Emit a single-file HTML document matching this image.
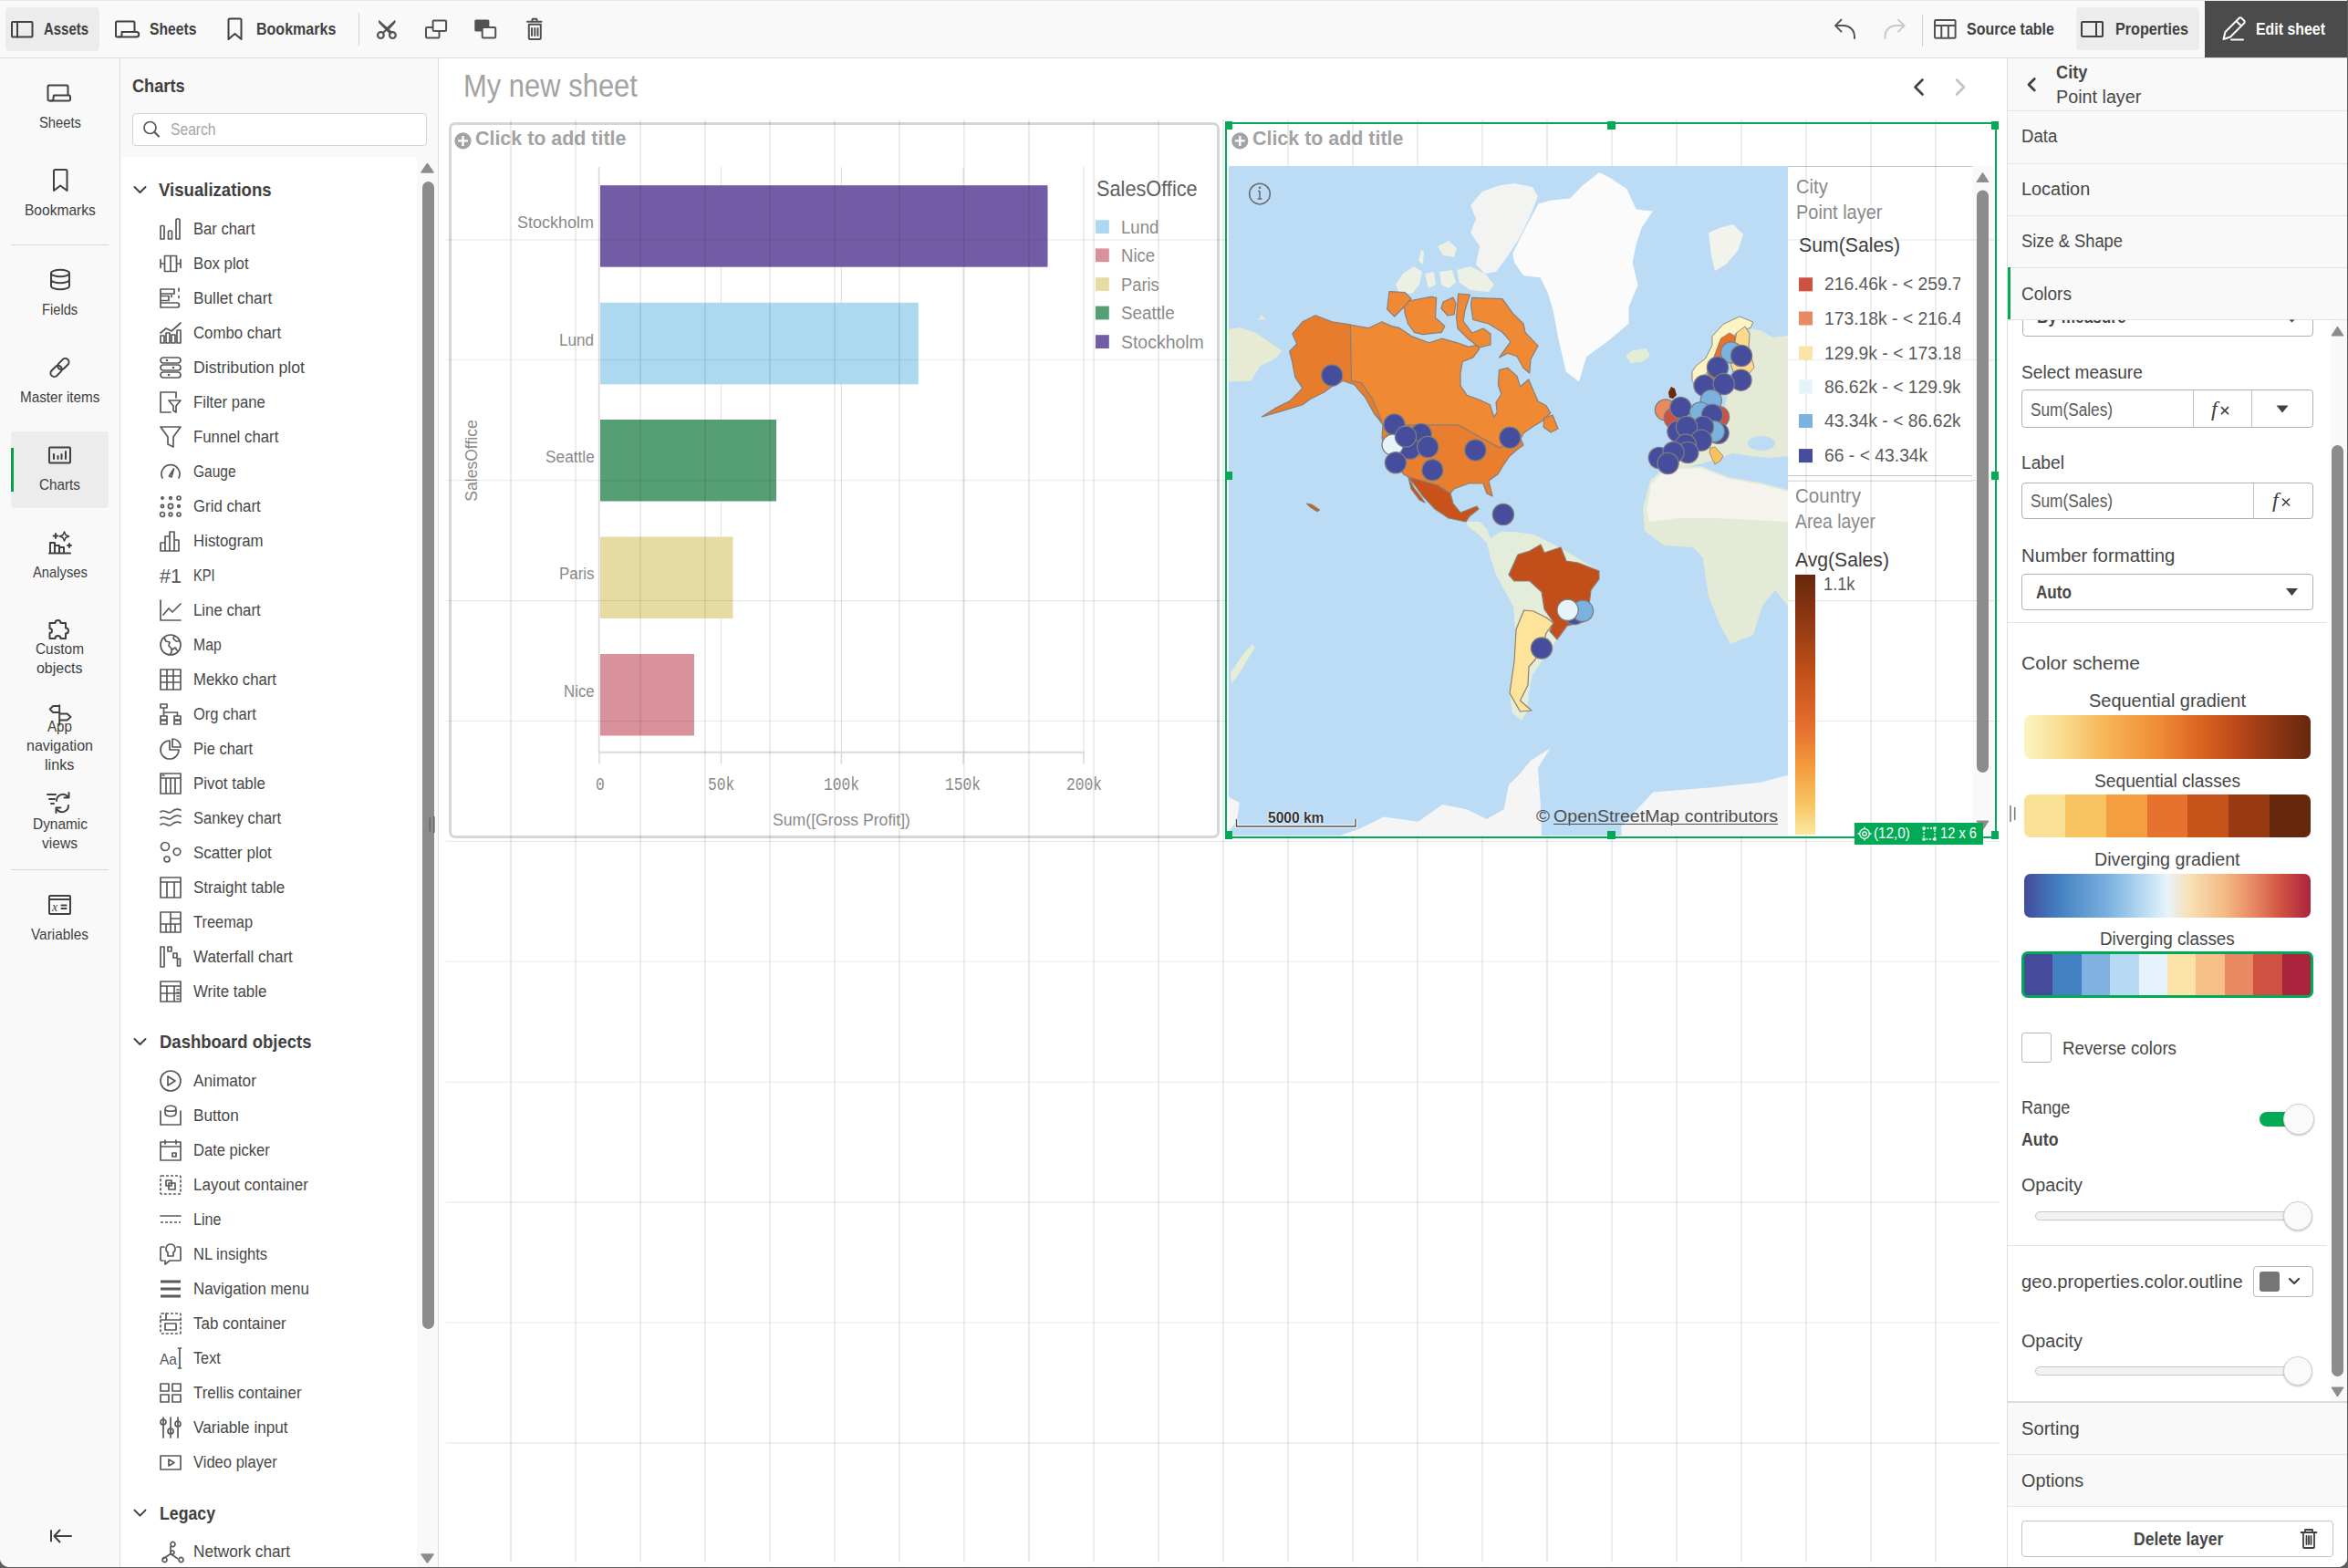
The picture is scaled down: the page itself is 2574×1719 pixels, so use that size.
<!DOCTYPE html><html><head><meta charset="utf-8"><title>Qlik sheet editor</title><style>
*{margin:0;padding:0;box-sizing:border-box}
html,body{width:2574px;height:1719px;overflow:hidden;background:#5e5e5e}
body{position:relative;font-family:"Liberation Sans",sans-serif}
#app{position:absolute;left:0;top:0;width:2573px;height:1717.7px;background:#fff;border-radius:0 0 10px 10px;overflow:hidden}
.t{position:absolute;white-space:nowrap;transform-origin:0 50%}
.r{position:absolute;display:block}
</style></head><body><div id="app"><div class="r" style="left:0.00px;top:0.00px;width:2574.00px;height:64.00px;background:#f9f9f9;"></div>
<div class="r" style="left:0.00px;top:0.00px;width:2574.00px;height:1.20px;background:#e8e8e8;"></div>
<div class="r" style="left:0.00px;top:63.00px;width:2574.00px;height:1.00px;background:#d9d9d9;"></div>
<div class="r" style="left:0.00px;top:64.00px;width:131.00px;height:1655.00px;background:#f9f9f9;"></div>
<div class="r" style="left:131.00px;top:64.00px;width:1.00px;height:1655.00px;background:#dedede;"></div>
<div class="r" style="left:132.00px;top:64.00px;width:348.00px;height:108.00px;background:#f9f9f9;"></div>
<div class="r" style="left:132.00px;top:172.00px;width:325.00px;height:1547.00px;background:#ffffff;"></div>
<div class="r" style="left:457.00px;top:172.00px;width:23.00px;height:1547.00px;background:#f9f9f9;"></div>
<div class="r" style="left:480.00px;top:64.00px;width:1.00px;height:1655.00px;background:#dedede;"></div>
<div class="r" style="left:2200.00px;top:64.00px;width:1.00px;height:1655.00px;background:#e0e0e0;"></div>
<div class="r" style="left:6.00px;top:8.00px;width:103.00px;height:48.00px;background:#ececec;border-radius:4px;"></div>
<div class="r" style="left:2276.00px;top:8.00px;width:135.00px;height:47.00px;background:#ececec;border-radius:4px;"></div>
<div class="r" style="left:2417.00px;top:1.10px;width:157.00px;height:61.90px;background:#4b4b4b;"></div>
<div class="r" style="left:393.00px;top:14.00px;width:1.00px;height:36.00px;background:#d0d0d0;"></div>
<div class="r" style="left:2107.00px;top:16.00px;width:1.00px;height:35.00px;background:#d0d0d0;"></div>
<div class="t" style="left:48.20px;top:21.77px;font-size:17.88px;line-height:21.45px;color:#404040;font-weight:700;transform:scaleX(0.8356);font-family:'Liberation Sans',sans-serif;">Assets</div>
<div class="t" style="left:163.50px;top:21.77px;font-size:17.88px;line-height:21.45px;color:#404040;font-weight:700;transform:scaleX(0.8784);font-family:'Liberation Sans',sans-serif;">Sheets</div>
<div class="t" style="left:281.40px;top:21.77px;font-size:17.88px;line-height:21.45px;color:#404040;font-weight:700;transform:scaleX(0.8975);font-family:'Liberation Sans',sans-serif;">Bookmarks</div>
<div class="t" style="left:2156.00px;top:21.77px;font-size:17.88px;line-height:21.45px;color:#404040;font-weight:700;transform:scaleX(0.8946);font-family:'Liberation Sans',sans-serif;">Source table</div>
<div class="t" style="left:2318.50px;top:21.77px;font-size:17.88px;line-height:21.45px;color:#404040;font-weight:700;transform:scaleX(0.9047);font-family:'Liberation Sans',sans-serif;">Properties</div>
<div class="t" style="left:2473.00px;top:21.77px;font-size:17.88px;line-height:21.45px;color:#ffffff;font-weight:700;transform:scaleX(0.8895);font-family:'Liberation Sans',sans-serif;">Edit sheet</div>
<div class="r" style="left:12.00px;top:268.00px;width:107.00px;height:1.00px;background:#d9d9d9;"></div>
<div class="r" style="left:12.00px;top:953.00px;width:107.00px;height:1.00px;background:#d9d9d9;"></div>
<div class="r" style="left:12.00px;top:473.40px;width:107.00px;height:83.20px;background:#ececec;border-radius:4px;"></div>
<div class="r" style="left:12.00px;top:490.60px;width:3.00px;height:48.40px;background:#0a9b4b;"></div>
<div class="t" style="left:42.70px;top:125.10px;font-size:15.99px;line-height:19.19px;color:#404040;transform:scaleX(0.9241);font-family:'Liberation Sans',sans-serif;">Sheets</div>
<div class="t" style="left:26.80px;top:221.21px;font-size:15.99px;line-height:19.19px;color:#404040;transform:scaleX(0.9729);font-family:'Liberation Sans',sans-serif;">Bookmarks</div>
<div class="t" style="left:46.10px;top:329.70px;font-size:15.99px;line-height:19.19px;color:#404040;transform:scaleX(0.9191);font-family:'Liberation Sans',sans-serif;">Fields</div>
<div class="t" style="left:21.95px;top:425.90px;font-size:15.99px;line-height:19.19px;color:#404040;transform:scaleX(0.9562);font-family:'Liberation Sans',sans-serif;">Master items</div>
<div class="t" style="left:43.20px;top:521.80px;font-size:15.99px;line-height:19.19px;color:#404040;transform:scaleX(0.9556);font-family:'Liberation Sans',sans-serif;">Charts</div>
<div class="t" style="left:35.70px;top:617.90px;font-size:15.99px;line-height:19.19px;color:#404040;transform:scaleX(0.9248);font-family:'Liberation Sans',sans-serif;">Analyses</div>
<div class="t" style="left:39.20px;top:701.90px;font-size:15.99px;line-height:19.19px;color:#404040;transform:scaleX(0.9621);font-family:'Liberation Sans',sans-serif;">Custom</div>
<div class="t" style="left:40.45px;top:722.61px;font-size:15.99px;line-height:19.19px;color:#404040;transform:scaleX(0.9969);font-family:'Liberation Sans',sans-serif;">objects</div>
<div class="t" style="left:52.20px;top:787.00px;font-size:15.99px;line-height:19.19px;color:#404040;transform:scaleX(0.9491);font-family:'Liberation Sans',sans-serif;">App</div>
<div class="t" style="left:29.20px;top:807.70px;font-size:15.99px;line-height:19.19px;color:#404040;transform:scaleX(1.0014);font-family:'Liberation Sans',sans-serif;">navigation</div>
<div class="t" style="left:49.45px;top:828.61px;font-size:15.99px;line-height:19.19px;color:#404040;transform:scaleX(1.0161);font-family:'Liberation Sans',sans-serif;">links</div>
<div class="t" style="left:35.70px;top:894.40px;font-size:15.99px;line-height:19.19px;color:#404040;transform:scaleX(0.9648);font-family:'Liberation Sans',sans-serif;">Dynamic</div>
<div class="t" style="left:46.20px;top:914.70px;font-size:15.99px;line-height:19.19px;color:#404040;transform:scaleX(0.9755);font-family:'Liberation Sans',sans-serif;">views</div>
<div class="t" style="left:34.20px;top:1014.90px;font-size:15.99px;line-height:19.19px;color:#404040;transform:scaleX(0.9623);font-family:'Liberation Sans',sans-serif;">Variables</div>
<div class="t" style="left:144.70px;top:81.81px;font-size:20.64px;line-height:24.77px;color:#404040;font-weight:700;transform:scaleX(0.8810);font-family:'Liberation Sans',sans-serif;">Charts</div>
<div class="r" style="left:144.50px;top:124.30px;width:323.00px;height:35.30px;background:#ffffff;border:1px solid #d4d4d4;border-radius:4px;box-sizing:border-box;"></div>
<div class="t" style="left:187.00px;top:131.01px;font-size:18.31px;line-height:21.98px;color:#a6a6a6;transform:scaleX(0.8547);font-family:'Liberation Sans',sans-serif;">Search</div>
<div class="t" style="left:174.40px;top:195.35px;font-size:21.08px;line-height:25.29px;color:#404040;font-weight:700;transform:scaleX(0.8818);font-family:'Liberation Sans',sans-serif;">Visualizations</div>
<div class="t" style="left:212.00px;top:239.49px;font-size:19.19px;line-height:23.02px;color:#474747;transform:scaleX(0.8671);font-family:'Liberation Sans',sans-serif;">Bar chart</div>
<div class="t" style="left:212.00px;top:277.49px;font-size:19.19px;line-height:23.02px;color:#474747;transform:scaleX(0.8741);font-family:'Liberation Sans',sans-serif;">Box plot</div>
<div class="t" style="left:212.00px;top:315.49px;font-size:19.19px;line-height:23.02px;color:#474747;transform:scaleX(0.8981);font-family:'Liberation Sans',sans-serif;">Bullet chart</div>
<div class="t" style="left:212.00px;top:353.49px;font-size:19.19px;line-height:23.02px;color:#474747;transform:scaleX(0.8749);font-family:'Liberation Sans',sans-serif;">Combo chart</div>
<div class="t" style="left:212.00px;top:391.49px;font-size:19.19px;line-height:23.02px;color:#474747;transform:scaleX(0.9226);font-family:'Liberation Sans',sans-serif;">Distribution plot</div>
<div class="t" style="left:212.00px;top:429.49px;font-size:19.19px;line-height:23.02px;color:#474747;transform:scaleX(0.8704);font-family:'Liberation Sans',sans-serif;">Filter pane</div>
<div class="t" style="left:212.00px;top:467.49px;font-size:19.19px;line-height:23.02px;color:#474747;transform:scaleX(0.8748);font-family:'Liberation Sans',sans-serif;">Funnel chart</div>
<div class="t" style="left:212.00px;top:505.49px;font-size:19.19px;line-height:23.02px;color:#474747;transform:scaleX(0.8072);font-family:'Liberation Sans',sans-serif;">Gauge</div>
<div class="t" style="left:212.00px;top:543.49px;font-size:19.19px;line-height:23.02px;color:#474747;transform:scaleX(0.8750);font-family:'Liberation Sans',sans-serif;">Grid chart</div>
<div class="t" style="left:212.00px;top:581.49px;font-size:19.19px;line-height:23.02px;color:#474747;transform:scaleX(0.8762);font-family:'Liberation Sans',sans-serif;">Histogram</div>
<div class="t" style="left:212.00px;top:619.49px;font-size:19.19px;line-height:23.02px;color:#474747;transform:scaleX(0.7599);font-family:'Liberation Sans',sans-serif;">KPI</div>
<div class="t" style="left:212.00px;top:657.49px;font-size:19.19px;line-height:23.02px;color:#474747;transform:scaleX(0.8747);font-family:'Liberation Sans',sans-serif;">Line chart</div>
<div class="t" style="left:212.00px;top:695.49px;font-size:19.19px;line-height:23.02px;color:#474747;transform:scaleX(0.8225);font-family:'Liberation Sans',sans-serif;">Map</div>
<div class="t" style="left:212.00px;top:733.49px;font-size:19.19px;line-height:23.02px;color:#474747;transform:scaleX(0.8709);font-family:'Liberation Sans',sans-serif;">Mekko chart</div>
<div class="t" style="left:212.00px;top:771.49px;font-size:19.19px;line-height:23.02px;color:#474747;transform:scaleX(0.8616);font-family:'Liberation Sans',sans-serif;">Org chart</div>
<div class="t" style="left:212.00px;top:809.49px;font-size:19.19px;line-height:23.02px;color:#474747;transform:scaleX(0.8598);font-family:'Liberation Sans',sans-serif;">Pie chart</div>
<div class="t" style="left:212.00px;top:847.49px;font-size:19.19px;line-height:23.02px;color:#474747;transform:scaleX(0.8807);font-family:'Liberation Sans',sans-serif;">Pivot table</div>
<div class="t" style="left:212.00px;top:885.49px;font-size:19.19px;line-height:23.02px;color:#474747;transform:scaleX(0.8582);font-family:'Liberation Sans',sans-serif;">Sankey chart</div>
<div class="t" style="left:212.00px;top:923.49px;font-size:19.19px;line-height:23.02px;color:#474747;transform:scaleX(0.8841);font-family:'Liberation Sans',sans-serif;">Scatter plot</div>
<div class="t" style="left:212.00px;top:961.49px;font-size:19.19px;line-height:23.02px;color:#474747;transform:scaleX(0.8854);font-family:'Liberation Sans',sans-serif;">Straight table</div>
<div class="t" style="left:212.00px;top:999.49px;font-size:19.19px;line-height:23.02px;color:#474747;transform:scaleX(0.8559);font-family:'Liberation Sans',sans-serif;">Treemap</div>
<div class="t" style="left:212.00px;top:1037.49px;font-size:19.19px;line-height:23.02px;color:#474747;transform:scaleX(0.8844);font-family:'Liberation Sans',sans-serif;">Waterfall chart</div>
<div class="t" style="left:212.00px;top:1075.49px;font-size:19.19px;line-height:23.02px;color:#474747;transform:scaleX(0.8790);font-family:'Liberation Sans',sans-serif;">Write table</div>
<div class="t" style="left:175.00px;top:1129.36px;font-size:21.08px;line-height:25.29px;color:#404040;font-weight:700;transform:scaleX(0.8771);font-family:'Liberation Sans',sans-serif;">Dashboard objects</div>
<div class="t" style="left:212.00px;top:1173.49px;font-size:19.19px;line-height:23.02px;color:#474747;transform:scaleX(0.8974);font-family:'Liberation Sans',sans-serif;">Animator</div>
<div class="t" style="left:212.00px;top:1211.49px;font-size:19.19px;line-height:23.02px;color:#474747;transform:scaleX(0.8960);font-family:'Liberation Sans',sans-serif;">Button</div>
<div class="t" style="left:212.00px;top:1249.49px;font-size:19.19px;line-height:23.02px;color:#474747;transform:scaleX(0.8636);font-family:'Liberation Sans',sans-serif;">Date picker</div>
<div class="t" style="left:212.00px;top:1287.49px;font-size:19.19px;line-height:23.02px;color:#474747;transform:scaleX(0.8868);font-family:'Liberation Sans',sans-serif;">Layout container</div>
<div class="t" style="left:212.00px;top:1325.49px;font-size:19.19px;line-height:23.02px;color:#474747;transform:scaleX(0.8408);font-family:'Liberation Sans',sans-serif;">Line</div>
<div class="t" style="left:212.00px;top:1363.49px;font-size:19.19px;line-height:23.02px;color:#474747;transform:scaleX(0.8609);font-family:'Liberation Sans',sans-serif;">NL insights</div>
<div class="t" style="left:212.00px;top:1401.49px;font-size:19.19px;line-height:23.02px;color:#474747;transform:scaleX(0.8807);font-family:'Liberation Sans',sans-serif;">Navigation menu</div>
<div class="t" style="left:212.00px;top:1439.49px;font-size:19.19px;line-height:23.02px;color:#474747;transform:scaleX(0.8829);font-family:'Liberation Sans',sans-serif;">Tab container</div>
<div class="t" style="left:212.00px;top:1477.49px;font-size:19.19px;line-height:23.02px;color:#474747;transform:scaleX(0.8469);font-family:'Liberation Sans',sans-serif;">Text</div>
<div class="t" style="left:212.00px;top:1515.49px;font-size:19.19px;line-height:23.02px;color:#474747;transform:scaleX(0.8797);font-family:'Liberation Sans',sans-serif;">Trellis container</div>
<div class="t" style="left:212.00px;top:1553.49px;font-size:19.19px;line-height:23.02px;color:#474747;transform:scaleX(0.8938);font-family:'Liberation Sans',sans-serif;">Variable input</div>
<div class="t" style="left:212.00px;top:1591.49px;font-size:19.19px;line-height:23.02px;color:#474747;transform:scaleX(0.8625);font-family:'Liberation Sans',sans-serif;">Video player</div>
<div class="t" style="left:174.80px;top:1645.95px;font-size:21.08px;line-height:25.29px;color:#404040;font-weight:700;transform:scaleX(0.8398);font-family:'Liberation Sans',sans-serif;">Legacy</div>
<div class="t" style="left:212.00px;top:1689.49px;font-size:19.19px;line-height:23.02px;color:#474747;transform:scaleX(0.8956);font-family:'Liberation Sans',sans-serif;">Network chart</div>
<div class="r" style="left:462.50px;top:199.00px;width:13.00px;height:1258.00px;background:#8c8c8c;border-radius:6.5px;"></div>
<div class="r" style="left:481.00px;top:64.00px;width:1719.00px;height:1655.00px;background:#ffffff;"></div>
<div class="t" style="left:507.50px;top:73.75px;font-size:34.59px;line-height:41.51px;color:#a3a3a3;transform:scaleX(0.8949);font-family:'Liberation Sans',sans-serif;">My new sheet</div>
<div class="r" style="left:492.20px;top:134.00px;width:845.00px;height:785.20px;background:transparent;border:3px solid #d6d6d6;border-radius:7px;"></div>
<div class="t" style="left:520.70px;top:138.11px;font-size:22.82px;line-height:27.38px;color:#a3a3a3;font-weight:700;transform:scaleX(0.9390);font-family:'Liberation Sans',sans-serif;">Click to add title</div>
<svg class="r" style="left:0.00px;top:0.00px;" width="2574.00" height="1719.00" viewBox="0 0 2574 1719"><line x1="790.5" y1="183" x2="790.5" y2="824" stroke="#e3e3e3" stroke-width="1.2"/><line x1="922.4" y1="183" x2="922.4" y2="824" stroke="#e3e3e3" stroke-width="1.2"/><line x1="1056" y1="183" x2="1056" y2="824" stroke="#e3e3e3" stroke-width="1.2"/><line x1="1188" y1="183" x2="1188" y2="824" stroke="#e3e3e3" stroke-width="1.2"/><line x1="656.7" y1="183" x2="656.7" y2="825" stroke="#d9d9d9" stroke-width="1.6"/><line x1="656" y1="824.8" x2="1189" y2="824.8" stroke="#d9d9d9" stroke-width="2"/><line x1="657" y1="825" x2="657" y2="837.5" stroke="#d9d9d9" stroke-width="1.5"/><line x1="790.5" y1="825" x2="790.5" y2="837.5" stroke="#d9d9d9" stroke-width="1.5"/><line x1="922.4" y1="825" x2="922.4" y2="837.5" stroke="#d9d9d9" stroke-width="1.5"/><line x1="1056" y1="825" x2="1056" y2="837.5" stroke="#d9d9d9" stroke-width="1.5"/><line x1="1188" y1="825" x2="1188" y2="837.5" stroke="#d9d9d9" stroke-width="1.5"/><rect x="658" y="203.2" width="490.5" height="89.5" fill="#735ca6"/><rect x="658" y="331.8" width="348.7" height="89.5" fill="#acd8f0"/><rect x="658" y="460" width="193" height="89.5" fill="#569e74"/><rect x="658" y="588.5" width="145.5" height="89.5" fill="#e6dca3"/><rect x="658" y="717" width="103" height="89.5" fill="#d9929c"/><circle cx="507.5" cy="154.4" r="9.1" fill="#a3a3a3"/><path d="M502 154.4 h11 M507.5 148.9 v11" stroke="#fff" stroke-width="2.4"/><rect x="1201" y="241.2" width="14.8" height="14.8" fill="#acd8f0"/><rect x="1201" y="272.4" width="14.8" height="14.8" fill="#d9929c"/><rect x="1201" y="304.2" width="14.8" height="14.8" fill="#e6dca3"/><rect x="1201" y="335.6" width="14.8" height="14.8" fill="#569e74"/><rect x="1201" y="367.2" width="14.8" height="14.8" fill="#735ca6"/></svg>
<div class="t" style="left:567.30px;top:233.06px;font-size:18.90px;line-height:22.67px;color:#8a8a8a;transform:scaleX(0.9522);font-family:'Liberation Sans',sans-serif;">Stockholm</div>
<div class="t" style="left:613.30px;top:361.67px;font-size:18.90px;line-height:22.67px;color:#8a8a8a;transform:scaleX(0.9040);font-family:'Liberation Sans',sans-serif;">Lund</div>
<div class="t" style="left:597.50px;top:490.17px;font-size:18.90px;line-height:22.67px;color:#8a8a8a;transform:scaleX(0.9145);font-family:'Liberation Sans',sans-serif;">Seattle</div>
<div class="t" style="left:612.80px;top:618.37px;font-size:18.90px;line-height:22.67px;color:#8a8a8a;transform:scaleX(0.8943);font-family:'Liberation Sans',sans-serif;">Paris</div>
<div class="t" style="left:617.60px;top:747.16px;font-size:18.90px;line-height:22.67px;color:#8a8a8a;transform:scaleX(0.8915);font-family:'Liberation Sans',sans-serif;">Nice</div>
<div class="t" style="left:1201.80px;top:192.60px;font-size:23.84px;line-height:28.60px;color:#5e5e5e;transform:scaleX(0.9114);font-family:'Liberation Sans',sans-serif;">SalesOffice</div>
<div class="t" style="left:1229.00px;top:236.59px;font-size:20.35px;line-height:24.42px;color:#8a8a8a;transform:scaleX(0.9145);font-family:'Liberation Sans',sans-serif;">Lund</div>
<div class="t" style="left:1229.00px;top:267.59px;font-size:20.35px;line-height:24.42px;color:#8a8a8a;transform:scaleX(0.9114);font-family:'Liberation Sans',sans-serif;">Nice</div>
<div class="t" style="left:1229.00px;top:299.69px;font-size:20.35px;line-height:24.42px;color:#8a8a8a;transform:scaleX(0.9016);font-family:'Liberation Sans',sans-serif;">Paris</div>
<div class="t" style="left:1229.00px;top:330.79px;font-size:20.35px;line-height:24.42px;color:#8a8a8a;transform:scaleX(0.9266);font-family:'Liberation Sans',sans-serif;">Seattle</div>
<div class="t" style="left:1229.00px;top:362.69px;font-size:20.35px;line-height:24.42px;color:#8a8a8a;transform:scaleX(0.9558);font-family:'Liberation Sans',sans-serif;">Stockholm</div>
<div class="t" style="left:653.10px;top:849.32px;font-size:20.30px;line-height:24.36px;color:#8a8a8a;transform:scaleX(0.8044);font-family:'Liberation Mono',monospace;">0</div>
<div class="t" style="left:776.30px;top:849.32px;font-size:20.30px;line-height:24.36px;color:#8a8a8a;transform:scaleX(0.8044);font-family:'Liberation Mono',monospace;">50k</div>
<div class="t" style="left:903.40px;top:849.32px;font-size:20.30px;line-height:24.36px;color:#8a8a8a;transform:scaleX(0.8044);font-family:'Liberation Mono',monospace;">100k</div>
<div class="t" style="left:1036.40px;top:849.32px;font-size:20.30px;line-height:24.36px;color:#8a8a8a;transform:scaleX(0.8044);font-family:'Liberation Mono',monospace;">150k</div>
<div class="t" style="left:1169.40px;top:849.32px;font-size:20.30px;line-height:24.36px;color:#8a8a8a;transform:scaleX(0.8044);font-family:'Liberation Mono',monospace;">200k</div>
<div class="t" style="left:847.00px;top:887.63px;font-size:18.60px;line-height:22.33px;color:#8a8a8a;transform:scaleX(0.9485);font-family:'Liberation Sans',sans-serif;">Sum([Gross Profit])</div>
<div class="r" style="left:516.6px;top:505px;width:0;height:0"><div class="r" style="left:0;top:0;white-space:nowrap;transform:translate(-50%,-50%) rotate(-90deg) scaleX(0.93);font-size:18.9px;line-height:22px;color:#8a8a8a">SalesOffice</div></div>
<svg class="r" style="left:0.00px;top:0.00px;" width="2574.00" height="1719.00" viewBox="0 0 2574 1719"><path d="M2107.5 87.5 l-8 8 l8 8" fill="none" stroke="#404040" stroke-width="2.6" stroke-linecap="round" stroke-linejoin="round"/><path d="M2145 87.5 l8 8 l-8 8" fill="none" stroke="#c4c4c4" stroke-width="2.6" stroke-linecap="round" stroke-linejoin="round"/></svg>
<div class="t" style="left:1372.50px;top:138.11px;font-size:22.82px;line-height:27.38px;color:#a3a3a3;font-weight:700;transform:scaleX(0.9390);font-family:'Liberation Sans',sans-serif;">Click to add title</div>
<div class="r" style="left:1960.00px;top:182.00px;width:202.00px;height:734.00px;background:#ffffff;"></div>
<div class="r" style="left:2162.00px;top:182.00px;width:24.00px;height:734.00px;background:#f9f9f9;"></div>
<div class="r" style="left:1960.00px;top:181.50px;width:202.00px;height:1.50px;background:#c8c8c8;"></div>
<div class="r" style="left:1960.00px;top:521.00px;width:202.00px;height:1.20px;background:#c8c8c8;"></div>
<div class="r" style="left:1960.00px;top:526.50px;width:202.00px;height:1.20px;background:#e0e0e0;"></div>
<svg class="r" style="left:0.00px;top:0.00px;" width="2574.00" height="1719.00" viewBox="0 0 2574 1719"><line x1="560" y1="131" x2="560" y2="1712.5" stroke="rgba(0,0,0,0.095)" stroke-width="1.5"/><line x1="631" y1="131" x2="631" y2="1712.5" stroke="rgba(0,0,0,0.095)" stroke-width="1.5"/><line x1="702" y1="131" x2="702" y2="1712.5" stroke="rgba(0,0,0,0.095)" stroke-width="1.5"/><line x1="773" y1="131" x2="773" y2="1712.5" stroke="rgba(0,0,0,0.095)" stroke-width="1.5"/><line x1="844" y1="131" x2="844" y2="1712.5" stroke="rgba(0,0,0,0.095)" stroke-width="1.5"/><line x1="915" y1="131" x2="915" y2="1712.5" stroke="rgba(0,0,0,0.095)" stroke-width="1.5"/><line x1="986" y1="131" x2="986" y2="1712.5" stroke="rgba(0,0,0,0.095)" stroke-width="1.5"/><line x1="1057" y1="131" x2="1057" y2="1712.5" stroke="rgba(0,0,0,0.095)" stroke-width="1.5"/><line x1="1128" y1="131" x2="1128" y2="1712.5" stroke="rgba(0,0,0,0.095)" stroke-width="1.5"/><line x1="1199" y1="131" x2="1199" y2="1712.5" stroke="rgba(0,0,0,0.095)" stroke-width="1.5"/><line x1="1270" y1="131" x2="1270" y2="1712.5" stroke="rgba(0,0,0,0.095)" stroke-width="1.5"/><line x1="1341" y1="131" x2="1341" y2="1712.5" stroke="rgba(0,0,0,0.095)" stroke-width="1.5"/><line x1="1412" y1="131" x2="1412" y2="1712.5" stroke="rgba(0,0,0,0.095)" stroke-width="1.5"/><line x1="1483" y1="131" x2="1483" y2="1712.5" stroke="rgba(0,0,0,0.095)" stroke-width="1.5"/><line x1="1554" y1="131" x2="1554" y2="1712.5" stroke="rgba(0,0,0,0.095)" stroke-width="1.5"/><line x1="1625" y1="131" x2="1625" y2="1712.5" stroke="rgba(0,0,0,0.095)" stroke-width="1.5"/><line x1="1696" y1="131" x2="1696" y2="1712.5" stroke="rgba(0,0,0,0.095)" stroke-width="1.5"/><line x1="1767" y1="131" x2="1767" y2="1712.5" stroke="rgba(0,0,0,0.095)" stroke-width="1.5"/><line x1="1838" y1="131" x2="1838" y2="1712.5" stroke="rgba(0,0,0,0.095)" stroke-width="1.5"/><line x1="1909" y1="131" x2="1909" y2="1712.5" stroke="rgba(0,0,0,0.095)" stroke-width="1.5"/><line x1="1980" y1="131" x2="1980" y2="1712.5" stroke="rgba(0,0,0,0.095)" stroke-width="1.5"/><line x1="2051" y1="131" x2="2051" y2="1712.5" stroke="rgba(0,0,0,0.095)" stroke-width="1.5"/><line x1="2122" y1="131" x2="2122" y2="1712.5" stroke="rgba(0,0,0,0.095)" stroke-width="1.5"/><line x1="489" y1="262.9" x2="2192" y2="262.9" stroke="rgba(0,0,0,0.085)" stroke-width="1.1"/><line x1="489" y1="394.8" x2="2192" y2="394.8" stroke="rgba(0,0,0,0.085)" stroke-width="1.1"/><line x1="489" y1="526.7" x2="2192" y2="526.7" stroke="rgba(0,0,0,0.085)" stroke-width="1.1"/><line x1="489" y1="658.6" x2="2192" y2="658.6" stroke="rgba(0,0,0,0.085)" stroke-width="1.1"/><line x1="489" y1="790.5" x2="2192" y2="790.5" stroke="rgba(0,0,0,0.085)" stroke-width="1.1"/><line x1="489" y1="922.4" x2="2192" y2="922.4" stroke="rgba(0,0,0,0.085)" stroke-width="1.1"/><line x1="489" y1="1054.3" x2="2192" y2="1054.3" stroke="rgba(0,0,0,0.085)" stroke-width="1.1"/><line x1="489" y1="1186.2" x2="2192" y2="1186.2" stroke="rgba(0,0,0,0.085)" stroke-width="1.1"/><line x1="489" y1="1318.1" x2="2192" y2="1318.1" stroke="rgba(0,0,0,0.085)" stroke-width="1.1"/><line x1="489" y1="1450" x2="2192" y2="1450" stroke="rgba(0,0,0,0.085)" stroke-width="1.1"/><line x1="489" y1="1581.9" x2="2192" y2="1581.9" stroke="rgba(0,0,0,0.085)" stroke-width="1.1"/></svg>
<svg class="r" style="left:0.00px;top:0.00px;" width="2574.00" height="1719.00" viewBox="0 0 2574 1719"><defs><clipPath id="mc"><rect x="1347" y="182" width="613" height="734"/></clipPath><clipPath id="lc"><rect x="1960" y="182" width="189" height="734"/></clipPath><linearGradient id="lg" x1="0" y1="0" x2="0" y2="1"><stop offset="0" stop-color="#66280d"/><stop offset="0.2" stop-color="#973a14"/><stop offset="0.4" stop-color="#c6531a"/><stop offset="0.6" stop-color="#e7722e"/><stop offset="0.75" stop-color="#f59e3f"/><stop offset="0.88" stop-color="#f8c462"/><stop offset="1" stop-color="#fbe7a2"/></linearGradient></defs><g clip-path="url(#mc)"><rect x="1347" y="182" width="613" height="734" fill="#bcdbf5"/><path d="M1347 361 L1359 359 L1377 365 L1391.5 375 L1405.6 385 L1397.5 393.3 L1381.4 401.4 L1371.3 417.5 L1347 418.5 Z" fill="#e8ebd3" /><path d="M1379 351 L1383 345 L1387 350 Z" fill="#e8ebd3" /><path d="M1612 225 L1625 210 L1645 203 L1660 201 L1680 205 L1686 215 L1676 240 L1665 262 L1650 285 L1640 298 L1628 300 L1618 290 L1622 270 L1612 255 L1618 240 Z" fill="#f3f3f1" /><path d="M1576 270 L1588 264 L1597 272 L1594 282 L1582 280 Z" fill="#edf0e4" /><path d="M1530 312 L1538 300 L1550 292 L1559 298 L1556 312 L1548 322 L1534 321 Z" fill="#edf0e4" /><path d="M1562 300 L1572 298 L1574 312 L1566 316 Z" fill="#edf0e4" /><path d="M1578 298 L1592 296 L1596 310 L1588 316 L1580 312 Z" fill="#edf0e4" /><path d="M1597 296 L1612 292 L1628 300 L1638 312 L1632 320 L1612 318 L1600 310 Z" fill="#edf0e4" /><path d="M1555 286 L1558 274 L1561 276 L1560 290 Z" fill="#edf0e4" /><path d="M1658.2 278 L1672.3 249.7 L1686.5 223.4 L1700.6 219.4 L1721 217.4 L1735 203.2 L1753.2 189 L1765.3 195 L1783.5 207.3 L1793.6 229.5 L1811.8 231.5 L1799.7 249.7 L1793.6 268 L1789.6 288 L1795.6 312.4 L1785.5 336.6 L1785.5 354.8 L1761.3 375 L1739 391.2 L1731 418.5 L1716.8 407.4 L1708.7 373 L1702.7 340.7 L1696.6 320.5 L1688.5 304.3 L1670.3 302.3 L1660.2 288 Z" fill="#fbfbfb" /><path d="M1782 390 L1790 384 L1805 382 L1809 390 L1800 397 L1788 398 Z" fill="#e4ecd6" /><path d="M1873 255 L1885 250 L1900 246 L1911 257 L1905 275 L1892 290 L1880 297 L1876 280 Z" fill="#f3f3ee" /><path d="M1919 360 L1931.5 362.7 L1943.6 370 L1960 368 L1960 500 L1940 502 L1920 500 L1900 497 L1886 502 L1870 507 L1850 512 L1830 516 L1816 510 L1822 495 L1845 480 L1870 468 L1886 463 L1891 445 L1895 427 L1905 415 L1923 403 L1918 380 Z" fill="#e4ead6" /><ellipse cx="1931" cy="486" rx="15" ry="8" fill="#bcdbf5"/><path d="M1801 558 L1809 527 L1824 513 L1864 511 L1895 523 L1930 529 L1960 537 L1960 664 L1946 647 L1932 664 L1922 696 L1897 706 L1885 684 L1873 654 L1866.5 611 L1856 600 L1824 598 L1803 582 Z" fill="#e3ebd6" /><path d="M1805 560 L1810 531 L1825 515 L1864 513 L1895 525 L1930 531 L1960 539 L1960 572 L1920 570 L1880 568 L1840 568 L1808 572 Z" fill="#f4f3ee" /><path d="M1607 572 L1622 572 L1630 580 L1634 590 L1645 583 L1660 583 L1681 586 L1700 595 L1711 601 L1730 612 L1753 626 L1753 635 L1744 647 L1742 664 L1736 682 L1718 686 L1707 701 L1700 712 L1690 725 L1680 740 L1676 760 L1674 780 L1668 790 L1658 782 L1655 760 L1659 725 L1661 690 L1659 665 L1648 645 L1640 630 L1634 612 L1630 595 L1620 585 L1610 578 Z" fill="#e4edda" /><path d="M1350 750 L1360 736 L1368 722 L1376 710 L1373 706 L1362 718 L1349 738 Z" fill="#e6efd6" /><path d="M1345 872.6 L1358.8 880 L1356 900 L1345 914 Z" fill="#f5f5f5" /><path d="M1468.8 916 L1490 908.8 L1517 895.4 L1554.6 900.7 L1581.5 882 L1608 887.3 L1630 898 L1648.6 887.3 L1654 860.5 L1667.3 847 L1678 833.7 L1699.5 820.2 L1686 841.7 L1688.8 882 L1690 916 Z" fill="#f5f5f5" /><path d="M1777.4 916 L1777.4 906 L1812 868.5 L1841.7 865.9 L1876.6 863.2 L1930 857.8 L1960 849.8 L1960 916 Z" fill="#f5f5f5" /><path d="M1480 356 L1500 359.7 L1515 352.8 L1525 357.4 L1534.4 359.7 L1548 368.9 L1566.6 375.8 L1580.4 371.2 L1597.6 375.8 L1610 380.4 L1619.4 378 L1621.7 382.7 L1614.8 391.9 L1603.3 396.5 L1601 409 L1601 422.9 L1608 433.2 L1620.6 437.8 L1633.2 443.5 L1637.8 457.3 L1641.2 451.6 L1640 441.2 L1645.8 432 L1642.4 421.7 L1643.5 405.6 L1652.7 403.3 L1663 412.5 L1666.5 424 L1675.7 416 L1686 440 L1695 444.7 L1699.8 452.7 L1690 462 L1680 468 L1670 475 L1667 481 L1660 483 L1644 491 L1620 478 L1599 466 L1540 466 L1516 466 L1508 455 L1497 430 L1485 418 L1480 417 Z" fill="#ef8934" stroke="#8c7e74" stroke-width="1.2" stroke-linejoin="round" /><path d="M1693 458 L1702 455 L1708 470 L1700 474 L1692 468 Z" fill="#ef8934" stroke="#8c7e74" stroke-width="1.2" stroke-linejoin="round" /><path d="M1613.7 326.4 L1647 327.6 L1658.5 343.6 L1670 355 L1672 364.3 L1686 379.2 L1678 394 L1676.8 409 L1670 403.3 L1663 390.7 L1652.7 387.3 L1643.5 391.9 L1656 374.6 L1647 364.3 L1632 355 L1614.8 350.5 L1612.5 334.4 Z" fill="#ef8934" stroke="#8c7e74" stroke-width="1.2" stroke-linejoin="round" /><path d="M1598.7 322 L1611.4 323 L1606 340 L1604 352 L1614 365 L1626 360 L1634 366 L1634 378 L1622 381 L1610 372 L1598 360 L1596.5 348 Z" fill="#ef8934" stroke="#8c7e74" stroke-width="1.2" stroke-linejoin="round" /><path d="M1582 331 L1593 326 L1596 333 L1594 345 L1587 346 L1580 338 Z" fill="#ef8934" stroke="#8c7e74" stroke-width="1.2" stroke-linejoin="round" /><path d="M1539 331 L1568.9 325.3 L1574.6 326.4 L1573.5 348.2 L1583.8 357.4 L1580.4 364.3 L1559.7 366.6 L1550.5 364.3 L1543.6 355 L1540.2 343.6 Z" fill="#ef8934" stroke="#8c7e74" stroke-width="1.2" stroke-linejoin="round" /><path d="M1523 319.5 L1540.2 320.7 L1547 327.6 L1537.9 337.9 L1528.7 347 L1520.7 339 Z" fill="#ef8934" stroke="#8c7e74" stroke-width="1.2" stroke-linejoin="round" /><path d="M1416.8 366 L1427.9 352.8 L1442 345.8 L1460.2 352.8 L1480.4 355.9 L1481.5 417.5 L1492.6 419.6 L1504.7 437.7 L1510.8 451.9 L1514.8 462 L1506.7 454 L1496.6 435.7 L1484.5 421.6 L1472.4 417.5 L1460.2 423.6 L1452 429.7 L1436 437.7 L1427.9 443.8 L1407.6 449.9 L1383.4 457 L1397.5 447.9 L1413.7 439.8 L1427.9 425.6 L1419.8 413.5 L1416.8 397.3 L1413.7 385.2 L1421.8 377 Z" fill="#e87c2d" stroke="#8c7e74" stroke-width="1.2" stroke-linejoin="round" /><path d="M1516 466 L1540 466 L1599 466 L1620 478 L1644 491 L1660 483 L1667 481 L1670 488 L1663 493 L1655 500 L1648 510 L1642 520 L1632 527 L1636 544 L1630 541 L1626 530 L1610 530 L1594 536 L1590 541 L1576 532 L1562 528 L1544 523 L1539 520 L1530 510 L1520 495 L1515 480 Z" fill="#e97e2f" stroke="#8c7e74" stroke-width="1.2" stroke-linejoin="round" /><path d="M1544 523 L1562 528 L1576 532 L1590 541 L1593 552 L1601 562 L1619 555 L1621 558 L1611 566 L1607 572 L1588 568 L1573 558 L1559 543 L1551 532 Z" fill="#c9521a" stroke="#8c7e74" stroke-width="1.2" stroke-linejoin="round" /><path d="M1544 523 L1550 535 L1558 545 L1562 551 L1556 548 L1547 536 Z" fill="#c9521a" stroke="#8c7e74" stroke-width="1.2" stroke-linejoin="round" /><path d="M1432 552 L1438 553 L1447 559 L1444 561 L1436 556 Z" fill="#b06a40" stroke="#8c7e74" stroke-width="0.8" stroke-linejoin="round" /><path d="M1654 630 L1664 608 L1677 604 L1689 597 L1693 606 L1711 600 L1717 615 L1730 617 L1753 626 L1753 635 L1744 647 L1742 664 L1736 682 L1718 686 L1707 701 L1699 692 L1703 682 L1693 668 L1690 649 L1677 637 L1660 637 Z" fill="#c24f1a" stroke="#8c7e74" stroke-width="1.2" stroke-linejoin="round" /><path d="M1670.6 669 L1681 670 L1695 677 L1703 683 L1695 694 L1692 704.5 L1683 723 L1676 731 L1675 751 L1666.5 768 L1679 779 L1666.5 780 L1655 760 L1660 725 L1662 690 Z" fill="#fde49a" stroke="#8c7e74" stroke-width="1.2" stroke-linejoin="round" /><path d="M1855 407.6 L1858.8 401.5 L1869.7 393 L1877 378.5 L1877 368.8 L1889 355.5 L1907 347 L1921.8 353 L1919.4 359 L1903.6 365 L1901 368.8 L1886.7 371 L1879.4 390.6 L1872 407.6 L1857.6 422 L1855 417 Z" fill="#fdf4c4" stroke="#8c7e74" stroke-width="0.9" stroke-linejoin="round" /><path d="M1879.4 390.6 L1886.7 371 L1896 365 L1902.4 368.8 L1901 381 L1893 398 L1888 420 L1880 430 L1872 425 L1872 407.6 Z" fill="#e8712b" stroke="#8c7e74" stroke-width="0.9" stroke-linejoin="round" /><path d="M1903.6 365 L1913 357.9 L1918 366 L1917 381 L1923 402.7 L1918 408.8 L1900 407.6 L1897.6 400 L1901 381 Z" fill="#fdd98b" stroke="#8c7e74" stroke-width="0.9" stroke-linejoin="round" /><path d="M1829 430 L1832 424 L1836 426 L1838 433 L1834 437 L1830 436 Z" fill="#6a2a0d" /><path d="M1875 491 L1880 490 L1889 500 L1886 505 L1880 509 L1877 503 L1874 496 Z" fill="#fbc25b" stroke="#8c7e74" stroke-width="0.8" stroke-linejoin="round" /><circle cx="1460.2" cy="411.5" r="11.6" fill="#464d9c" stroke="#7d7d80" stroke-width="1.3"/><circle cx="1557.7" cy="476" r="11.6" fill="#464d9c" stroke="#7d7d80" stroke-width="1.3"/><circle cx="1545.7" cy="491.8" r="11.6" fill="#464d9c" stroke="#7d7d80" stroke-width="1.3"/><circle cx="1528.5" cy="465.4" r="11.6" fill="#464d9c" stroke="#7d7d80" stroke-width="1.3"/><circle cx="1526.7" cy="487.7" r="11.6" fill="#e6f3fb" stroke="#7d7d80" stroke-width="1.3"/><circle cx="1541" cy="478.6" r="11.6" fill="#464d9c" stroke="#7d7d80" stroke-width="1.3"/><circle cx="1565.2" cy="490" r="11.6" fill="#464d9c" stroke="#7d7d80" stroke-width="1.3"/><circle cx="1530" cy="507.3" r="11.6" fill="#464d9c" stroke="#7d7d80" stroke-width="1.3"/><circle cx="1570.4" cy="515.3" r="11.6" fill="#464d9c" stroke="#7d7d80" stroke-width="1.3"/><circle cx="1617.4" cy="493.5" r="11.6" fill="#464d9c" stroke="#7d7d80" stroke-width="1.3"/><circle cx="1655.3" cy="479.7" r="11.6" fill="#464d9c" stroke="#7d7d80" stroke-width="1.3"/><circle cx="1647.9" cy="564" r="11.6" fill="#464d9c" stroke="#7d7d80" stroke-width="1.3"/><circle cx="1726" cy="673" r="11.6" fill="#464d9c" stroke="#7d7d80" stroke-width="1.3"/><circle cx="1735" cy="669.8" r="11.6" fill="#7ab3e0" stroke="#7d7d80" stroke-width="1.3"/><circle cx="1718.6" cy="668.8" r="11.6" fill="#e6f3fb" stroke="#7d7d80" stroke-width="1.3"/><circle cx="1690" cy="710.6" r="11.6" fill="#464d9c" stroke="#7d7d80" stroke-width="1.3"/><circle cx="1898" cy="386.4" r="11.6" fill="#7ab3e0" stroke="#7d7d80" stroke-width="1.3"/><circle cx="1909" cy="390" r="11.6" fill="#464d9c" stroke="#7d7d80" stroke-width="1.3"/><circle cx="1883" cy="402.7" r="11.6" fill="#464d9c" stroke="#7d7d80" stroke-width="1.3"/><circle cx="1908.5" cy="416.7" r="11.6" fill="#464d9c" stroke="#7d7d80" stroke-width="1.3"/><circle cx="1868.5" cy="422.7" r="11.6" fill="#464d9c" stroke="#7d7d80" stroke-width="1.3"/><circle cx="1889.7" cy="421" r="11.6" fill="#464d9c" stroke="#7d7d80" stroke-width="1.3"/><circle cx="1875.8" cy="439" r="11.6" fill="#7ab3e0" stroke="#7d7d80" stroke-width="1.3"/><circle cx="1884" cy="457" r="11.6" fill="#cf5142" stroke="#7d7d80" stroke-width="1.3"/><circle cx="1826" cy="449.4" r="11.6" fill="#e98a63" stroke="#7d7d80" stroke-width="1.3"/><circle cx="1835.8" cy="458.5" r="11.6" fill="#cf5142" stroke="#7d7d80" stroke-width="1.3"/><circle cx="1842.4" cy="447" r="11.6" fill="#464d9c" stroke="#7d7d80" stroke-width="1.3"/><circle cx="1864" cy="452.4" r="11.6" fill="#7ab3e0" stroke="#7d7d80" stroke-width="1.3"/><circle cx="1877" cy="454.8" r="11.6" fill="#464d9c" stroke="#7d7d80" stroke-width="1.3"/><circle cx="1883.6" cy="474.8" r="11.6" fill="#464d9c" stroke="#7d7d80" stroke-width="1.3"/><circle cx="1878.8" cy="473" r="11.6" fill="#7ab3e0" stroke="#7d7d80" stroke-width="1.3"/><circle cx="1839.4" cy="473" r="11.6" fill="#464d9c" stroke="#7d7d80" stroke-width="1.3"/><circle cx="1867" cy="468" r="11.6" fill="#464d9c" stroke="#7d7d80" stroke-width="1.3"/><circle cx="1849" cy="468" r="11.6" fill="#464d9c" stroke="#7d7d80" stroke-width="1.3"/><circle cx="1865" cy="482.7" r="11.6" fill="#464d9c" stroke="#7d7d80" stroke-width="1.3"/><circle cx="1848" cy="487.6" r="11.6" fill="#464d9c" stroke="#7d7d80" stroke-width="1.3"/><circle cx="1850.3" cy="496" r="11.6" fill="#464d9c" stroke="#7d7d80" stroke-width="1.3"/><circle cx="1818.8" cy="502" r="11.6" fill="#464d9c" stroke="#7d7d80" stroke-width="1.3"/><circle cx="1834.5" cy="496" r="11.6" fill="#464d9c" stroke="#7d7d80" stroke-width="1.3"/><circle cx="1828.5" cy="508" r="11.6" fill="#464d9c" stroke="#7d7d80" stroke-width="1.3"/></g><circle cx="1359.3" cy="154.4" r="9.1" fill="#a3a3a3"/><path d="M1353.8 154.4 h11 M1359.3 148.9 v11" stroke="#fff" stroke-width="2.4"/><circle cx="1381" cy="212.6" r="11.3" fill="none" stroke="#6b6b6b" stroke-width="1.5"/><path d="M1381 209.5 v8.5 M1378.5 218 h5 M1379 209.5 h2" stroke="#6b6b6b" stroke-width="1.6" fill="none"/><circle cx="1381" cy="205.8" r="1.2" fill="#6b6b6b"/><path d="M1355.5 898 v8 h130.5 v-8" fill="none" stroke="#ffffff" stroke-width="3.5"/><path d="M1355.5 898 v8 h130.5 v-8" fill="none" stroke="#505050" stroke-width="1.4"/><rect x="1972" y="304.3" width="15" height="15" fill="#cf5142"/><rect x="1972" y="341.5" width="15" height="15" fill="#e98a63"/><rect x="1972" y="379.5" width="15" height="15" fill="#fbe3a8"/><rect x="1972" y="416.5" width="15" height="15" fill="#e6f3fb"/><rect x="1972" y="454" width="15" height="15" fill="#7ab3e0"/><rect x="1972" y="492.1" width="15" height="15" fill="#464d9c"/><rect x="1968" y="630" width="22" height="285" fill="url(#lg)"/><rect x="2167" y="208.6" width="13" height="638.4" rx="6.5" fill="#8c8c8c"/><path d="M2167 199.4 l6.5 -10 l6.5 10 z" fill="#8c8c8c" stroke="#8c8c8c" stroke-linejoin="round"/><path d="M2167 900 l6.5 10 l6.5 -10 z" fill="#8c8c8c" stroke="#8c8c8c" stroke-linejoin="round"/></svg>
<div class="t" style="left:1389.55px;top:887.24px;font-size:16.28px;line-height:19.53px;color:#333333;font-weight:700;transform:scaleX(0.9569);font-family:'Liberation Sans',sans-serif;text-shadow:0 0 2px #fff,0 0 2px #fff;">5000 km</div>
<div class="t" style="left:1684.00px;top:882.89px;font-size:19.19px;line-height:23.02px;color:#4d4d4d;transform:scaleX(1.0611);font-family:'Liberation Sans',sans-serif;">©</div>
<div class="t" style="left:1703.00px;top:882.89px;font-size:19.19px;line-height:23.02px;color:#4d4d4d;transform:scaleX(1.0207);font-family:'Liberation Sans',sans-serif;text-decoration:underline;text-decoration-thickness:1px;text-underline-offset:2px;">OpenStreetMap contributors</div>
<div class="t" style="left:1968.60px;top:191.92px;font-size:21.80px;line-height:26.16px;color:#8a8a8a;transform:scaleX(0.9268);font-family:'Liberation Sans',sans-serif;">City</div>
<div class="t" style="left:1968.60px;top:220.32px;font-size:21.80px;line-height:26.16px;color:#8a8a8a;transform:scaleX(0.9174);font-family:'Liberation Sans',sans-serif;">Point layer</div>
<div class="t" style="left:1972.00px;top:256.07px;font-size:22.38px;line-height:26.86px;color:#3d3d3d;transform:scaleX(0.9493);font-family:'Liberation Sans',sans-serif;">Sum(Sales)</div>
<div class="r" style="left:1998px;top:299.8px;width:151px;height:24px;overflow:hidden"><div class="t" style="left:2.00px;top:-0.47px;font-size:20.78px;line-height:24.94px;color:#5a5a5a;transform:scaleX(0.9300);font-family:'Liberation Sans',sans-serif;">216.46k - &lt; 259.7</div></div>
<div class="r" style="left:1998px;top:337px;width:151px;height:24px;overflow:hidden"><div class="t" style="left:2.00px;top:-0.47px;font-size:20.78px;line-height:24.94px;color:#5a5a5a;transform:scaleX(0.9300);font-family:'Liberation Sans',sans-serif;">173.18k - &lt; 216.4</div></div>
<div class="r" style="left:1998px;top:375px;width:151px;height:24px;overflow:hidden"><div class="t" style="left:2.00px;top:-0.47px;font-size:20.78px;line-height:24.94px;color:#5a5a5a;transform:scaleX(0.9300);font-family:'Liberation Sans',sans-serif;">129.9k - &lt; 173.18</div></div>
<div class="r" style="left:1998px;top:412px;width:151px;height:24px;overflow:hidden"><div class="t" style="left:2.00px;top:-0.47px;font-size:20.78px;line-height:24.94px;color:#5a5a5a;transform:scaleX(0.9300);font-family:'Liberation Sans',sans-serif;">86.62k - &lt; 129.9k</div></div>
<div class="r" style="left:1998px;top:449.5px;width:151px;height:24px;overflow:hidden"><div class="t" style="left:2.00px;top:-0.47px;font-size:20.78px;line-height:24.94px;color:#5a5a5a;transform:scaleX(0.9300);font-family:'Liberation Sans',sans-serif;">43.34k - &lt; 86.62k</div></div>
<div class="r" style="left:1998px;top:487.6px;width:151px;height:24px;overflow:hidden"><div class="t" style="left:2.00px;top:-0.47px;font-size:20.78px;line-height:24.94px;color:#5a5a5a;transform:scaleX(0.9300);font-family:'Liberation Sans',sans-serif;">66 - &lt; 43.34k</div></div>
<div class="t" style="left:1968.00px;top:530.92px;font-size:21.80px;line-height:26.16px;color:#8a8a8a;transform:scaleX(0.9431);font-family:'Liberation Sans',sans-serif;">Country</div>
<div class="t" style="left:1968.00px;top:558.92px;font-size:21.80px;line-height:26.16px;color:#8a8a8a;transform:scaleX(0.8856);font-family:'Liberation Sans',sans-serif;">Area layer</div>
<div class="t" style="left:1968.00px;top:600.57px;font-size:22.38px;line-height:26.86px;color:#3d3d3d;transform:scaleX(0.9443);font-family:'Liberation Sans',sans-serif;">Avg(Sales)</div>
<div class="t" style="left:1999.00px;top:628.03px;font-size:20.78px;line-height:24.94px;color:#5a5a5a;transform:scaleX(0.8782);font-family:'Liberation Sans',sans-serif;">1.1k</div>
<div class="r" style="left:1342.55px;top:133.95px;width:846.50px;height:785.00px;background:transparent;border:2.9px solid #03aa55;"></div>
<div class="r" style="left:1342.70px;top:132.80px;width:8.60px;height:9.00px;background:#03aa55;"></div>
<div class="r" style="left:1762.20px;top:132.80px;width:8.60px;height:9.00px;background:#03aa55;"></div>
<div class="r" style="left:2182.50px;top:132.80px;width:8.60px;height:9.00px;background:#03aa55;"></div>
<div class="r" style="left:1342.70px;top:517.00px;width:8.60px;height:9.00px;background:#03aa55;"></div>
<div class="r" style="left:2182.50px;top:517.00px;width:8.60px;height:9.00px;background:#03aa55;"></div>
<div class="r" style="left:1342.70px;top:911.00px;width:8.60px;height:9.00px;background:#03aa55;"></div>
<div class="r" style="left:1762.20px;top:911.00px;width:8.60px;height:9.00px;background:#03aa55;"></div>
<div class="r" style="left:2182.50px;top:911.00px;width:8.60px;height:9.00px;background:#03aa55;"></div>
<div class="r" style="left:2033.00px;top:902.00px;width:140.60px;height:24.00px;background:#03aa55;"></div>
<svg class="r" style="left:0.00px;top:0.00px;" width="2574.00" height="1719.00" viewBox="0 0 2574 1719"><circle cx="2044" cy="914" r="5.3" fill="none" stroke="#fff" stroke-width="1.3"/><circle cx="2044" cy="914" r="2.2" fill="none" stroke="#fff" stroke-width="1.3"/><path d="M2044 906.5 v2 M2044 919.5 v2 M2036.5 914 h2 M2049.5 914 h2" stroke="#fff" stroke-width="1.3"/><rect x="2109" y="908" width="12" height="12" fill="none" stroke="#fff" stroke-width="1.3" stroke-dasharray="2 1.5"/><rect x="2107.5" y="906.5" width="3" height="3" fill="#fff"/><rect x="2119.5" y="906.5" width="3" height="3" fill="#fff"/><rect x="2107.5" y="918.5" width="3" height="3" fill="#fff"/><rect x="2119.5" y="918.5" width="3" height="3" fill="#fff"/></svg>
<div class="t" style="left:2053.50px;top:904.14px;font-size:16.42px;line-height:19.71px;color:#ffffff;transform:scaleX(0.9322);font-family:'Liberation Sans',sans-serif;">(12,0)</div>
<div class="t" style="left:2127.00px;top:904.14px;font-size:16.42px;line-height:19.71px;color:#ffffff;transform:scaleX(0.8940);font-family:'Liberation Sans',sans-serif;">12 x 6</div>
<div class="r" style="left:2201.00px;top:64.00px;width:373.00px;height:1655.00px;background:#f9f9f9;"></div>
<div class="r" style="left:2201.00px;top:350.00px;width:354.00px;height:1187.00px;background:#ffffff;"></div>
<div class="r" style="left:2201.00px;top:1651.00px;width:373.00px;height:68.00px;background:#ffffff;"></div>
<div class="r" style="left:2201.00px;top:121.00px;width:373.00px;height:1.00px;background:#e3e3e3;"></div>
<div class="r" style="left:2201.00px;top:179.00px;width:373.00px;height:1.00px;background:#e3e3e3;"></div>
<div class="r" style="left:2201.00px;top:236.00px;width:373.00px;height:1.00px;background:#e3e3e3;"></div>
<div class="r" style="left:2201.00px;top:293.00px;width:373.00px;height:1.00px;background:#e3e3e3;"></div>
<div class="r" style="left:2201.00px;top:349.50px;width:373.00px;height:1.00px;background:#e3e3e3;"></div>
<div class="r" style="left:2201.00px;top:1536.00px;width:373.00px;height:1.60px;background:#dcdcdc;"></div>
<div class="r" style="left:2201.00px;top:1594.00px;width:373.00px;height:1.00px;background:#e3e3e3;"></div>
<div class="r" style="left:2201.00px;top:1650.50px;width:373.00px;height:1.00px;background:#e3e3e3;"></div>
<div class="r" style="left:2200.70px;top:293.00px;width:3.30px;height:57.00px;background:#03aa55;"></div>
<div class="t" style="left:2253.70px;top:66.97px;font-size:20.06px;line-height:24.07px;color:#474747;font-weight:700;transform:scaleX(0.9078);font-family:'Liberation Sans',sans-serif;">City</div>
<div class="t" style="left:2254.00px;top:95.14px;font-size:19.77px;line-height:23.72px;color:#474747;transform:scaleX(0.9990);font-family:'Liberation Sans',sans-serif;">Point layer</div>
<div class="t" style="left:2215.70px;top:138.24px;font-size:19.77px;line-height:23.72px;color:#474747;transform:scaleX(0.9412);font-family:'Liberation Sans',sans-serif;">Data</div>
<div class="t" style="left:2215.70px;top:196.24px;font-size:19.77px;line-height:23.72px;color:#474747;transform:scaleX(1.0062);font-family:'Liberation Sans',sans-serif;">Location</div>
<div class="t" style="left:2215.70px;top:253.24px;font-size:19.77px;line-height:23.72px;color:#474747;transform:scaleX(0.9267);font-family:'Liberation Sans',sans-serif;">Size &amp; Shape</div>
<div class="t" style="left:2215.70px;top:311.24px;font-size:19.77px;line-height:23.72px;color:#474747;transform:scaleX(0.9611);font-family:'Liberation Sans',sans-serif;">Colors</div>
<div class="r" style="left:2201px;top:350.5px;width:354px;height:20px;overflow:hidden"><div class="r" style="left:15.5px;top:-22px;width:319.5px;height:40px;border:1.3px solid #b0b0b0;border-radius:4px;background:#fff"></div><div class="t" style="left:31.70px;top:-14.66px;font-size:19.77px;line-height:23.72px;color:#474747;font-weight:700;transform:scaleX(0.8708);font-family:'Liberation Sans',sans-serif;">By measure</div></div>
<div class="t" style="left:2216.20px;top:396.54px;font-size:19.77px;line-height:23.72px;color:#474747;transform:scaleX(0.9676);font-family:'Liberation Sans',sans-serif;">Select measure</div>
<div class="r" style="left:2216.20px;top:427.30px;width:319.80px;height:41.30px;background:#fff;border:1.3px solid #b0b0b0;border-radius:4px;"></div>
<div class="r" style="left:2403.50px;top:428.00px;width:1.20px;height:40.00px;background:#c4c4c4;"></div>
<div class="r" style="left:2468.00px;top:428.00px;width:1.20px;height:40.00px;background:#c4c4c4;"></div>
<div class="t" style="left:2226.20px;top:437.84px;font-size:19.77px;line-height:23.72px;color:#5a5a5a;transform:scaleX(0.8716);font-family:'Liberation Sans',sans-serif;">Sum(Sales)</div>
<div class="t" style="left:2215.70px;top:496.24px;font-size:19.77px;line-height:23.72px;color:#474747;transform:scaleX(0.9717);font-family:'Liberation Sans',sans-serif;">Label</div>
<div class="r" style="left:2216.20px;top:528.60px;width:319.80px;height:40.60px;background:#fff;border:1.3px solid #b0b0b0;border-radius:4px;"></div>
<div class="r" style="left:2470.00px;top:529.50px;width:1.20px;height:39.00px;background:#c4c4c4;"></div>
<div class="t" style="left:2226.20px;top:538.24px;font-size:19.77px;line-height:23.72px;color:#5a5a5a;transform:scaleX(0.8716);font-family:'Liberation Sans',sans-serif;">Sum(Sales)</div>
<div class="t" style="left:2215.70px;top:597.94px;font-size:19.77px;line-height:23.72px;color:#474747;transform:scaleX(1.0287);font-family:'Liberation Sans',sans-serif;">Number formatting</div>
<div class="r" style="left:2216.20px;top:628.60px;width:319.80px;height:40.60px;background:#fff;border:1.3px solid #b0b0b0;border-radius:4px;"></div>
<div class="t" style="left:2232.00px;top:638.24px;font-size:19.77px;line-height:23.72px;color:#474747;font-weight:700;transform:scaleX(0.8665);font-family:'Liberation Sans',sans-serif;">Auto</div>
<div class="r" style="left:2201.00px;top:682.20px;width:350.00px;height:1.00px;background:#e3e3e3;"></div>
<div class="t" style="left:2215.70px;top:714.57px;font-size:20.06px;line-height:24.07px;color:#474747;transform:scaleX(1.0506);font-family:'Liberation Sans',sans-serif;">Color scheme</div>
<div class="t" style="left:2289.60px;top:757.24px;font-size:19.77px;line-height:23.72px;color:#474747;transform:scaleX(1.0097);font-family:'Liberation Sans',sans-serif;">Sequential gradient</div>
<div class="t" style="left:2295.60px;top:844.64px;font-size:19.77px;line-height:23.72px;color:#474747;transform:scaleX(0.9707);font-family:'Liberation Sans',sans-serif;">Sequential classes</div>
<div class="t" style="left:2295.80px;top:931.24px;font-size:19.77px;line-height:23.72px;color:#474747;transform:scaleX(0.9948);font-family:'Liberation Sans',sans-serif;">Diverging gradient</div>
<div class="t" style="left:2301.70px;top:1018.24px;font-size:19.77px;line-height:23.72px;color:#474747;transform:scaleX(0.9541);font-family:'Liberation Sans',sans-serif;">Diverging classes</div>
<div class="r" style="left:2219.00px;top:784.00px;width:314.00px;height:47.60px;background:linear-gradient(90deg,#fbf5c0 0%,#f9d889 15%,#f6b152 30%,#ef8a35 48%,#d9621f 62%,#b8481a 75%,#8c3414 88%,#66280d 100%);border-radius:7px;"></div>
<div class="r" style="left:2219.00px;top:871.00px;width:314.00px;height:47.40px;background:linear-gradient(90deg,#f9e196 0.00%,#f9e196 14.29%,#f8c462 14.29%,#f8c462 28.57%,#f59e3f 28.57%,#f59e3f 42.86%,#e7722e 42.86%,#e7722e 57.14%,#c6531a 57.14%,#c6531a 71.43%,#973a14 71.43%,#973a14 85.71%,#66280d 85.71%,#66280d 100.00%);border-radius:7px;"></div>
<div class="r" style="left:2219.00px;top:958.00px;width:314.00px;height:47.60px;background:linear-gradient(90deg,#424b9b 0%,#4380c1 12%,#7db3e0 30%,#b9dbf3 42%,#e8f3fa 50%,#f8e0b2 58%,#f4b984 70%,#e88964 80%,#cf5142 90%,#aa243d 100%);border-radius:7px;"></div>
<div class="r" style="left:2216.00px;top:1042.80px;width:320.00px;height:51.40px;background:linear-gradient(90deg,#454a9b 0.00%,#454a9b 10.00%,#4380c1 10.00%,#4380c1 20.00%,#7fb2e0 20.00%,#7fb2e0 30.00%,#b8daf3 30.00%,#b8daf3 40.00%,#e6f2fb 40.00%,#e6f2fb 50.00%,#fbe3a8 50.00%,#fbe3a8 60.00%,#f5bf87 60.00%,#f5bf87 70.00%,#e88964 70.00%,#e88964 80.00%,#cf5142 80.00%,#cf5142 90.00%,#aa243d 90.00%,#aa243d 100.00%);border:3px solid #03aa55;border-radius:7px;"></div>
<div class="r" style="left:2216.00px;top:1132.00px;width:32.60px;height:32.60px;background:#fff;border:1.3px solid #b8b8b8;border-radius:3px;"></div>
<div class="t" style="left:2261.00px;top:1138.24px;font-size:19.77px;line-height:23.72px;color:#474747;transform:scaleX(0.9482);font-family:'Liberation Sans',sans-serif;">Reverse colors</div>
<div class="t" style="left:2215.70px;top:1203.24px;font-size:19.77px;line-height:23.72px;color:#474747;transform:scaleX(0.9167);font-family:'Liberation Sans',sans-serif;">Range</div>
<div class="t" style="left:2215.70px;top:1237.74px;font-size:19.77px;line-height:23.72px;color:#474747;font-weight:700;transform:scaleX(0.8998);font-family:'Liberation Sans',sans-serif;">Auto</div>
<div class="r" style="left:2477.00px;top:1219.00px;width:46.00px;height:15.50px;background:#03aa55;border-radius:8px;"></div>
<div class="r" style="left:2503.00px;top:1210.00px;width:34.00px;height:34.00px;background:#fafafa;border-radius:50%;border:1px solid #d0d0d0;box-shadow:0 1px 2px rgba(0,0,0,0.25);"></div>
<div class="t" style="left:2215.70px;top:1288.24px;font-size:19.77px;line-height:23.72px;color:#474747;transform:scaleX(0.9998);font-family:'Liberation Sans',sans-serif;">Opacity</div>
<div class="r" style="left:2231.00px;top:1327.60px;width:304.00px;height:10.00px;background:#f2f2f2;border:1px solid #c8c8c8;border-radius:5px;"></div>
<div class="r" style="left:2503.00px;top:1316.60px;width:32.00px;height:32.00px;background:#fafafa;border-radius:50%;border:1px solid #d0d0d0;box-shadow:0 1px 2px rgba(0,0,0,0.25);"></div>
<div class="t" style="left:2215.70px;top:1459.24px;font-size:19.77px;line-height:23.72px;color:#474747;transform:scaleX(0.9998);font-family:'Liberation Sans',sans-serif;">Opacity</div>
<div class="r" style="left:2231.00px;top:1498.30px;width:304.00px;height:10.00px;background:#f2f2f2;border:1px solid #c8c8c8;border-radius:5px;"></div>
<div class="r" style="left:2503.00px;top:1487.30px;width:32.00px;height:32.00px;background:#fafafa;border-radius:50%;border:1px solid #d0d0d0;box-shadow:0 1px 2px rgba(0,0,0,0.25);"></div>
<div class="r" style="left:2201.00px;top:1365.20px;width:350.00px;height:1.00px;background:#e3e3e3;"></div>
<div class="t" style="left:2215.70px;top:1394.24px;font-size:19.77px;line-height:23.72px;color:#474747;transform:scaleX(1.0229);font-family:'Liberation Sans',sans-serif;">geo.properties.color.outline</div>
<div class="r" style="left:2470.00px;top:1387.70px;width:65.50px;height:34.30px;background:#fff;border:1.3px solid #b8b8b8;border-radius:4px;"></div>
<div class="r" style="left:2476.50px;top:1394.00px;width:22.50px;height:22.00px;background:#757575;border-radius:3px;"></div>
<div class="r" style="left:2556.00px;top:487.50px;width:13.00px;height:1021.50px;background:#8c8c8c;border-radius:6.5px;"></div>
<div class="t" style="left:2215.70px;top:1554.74px;font-size:19.77px;line-height:23.72px;color:#474747;transform:scaleX(1.0186);font-family:'Liberation Sans',sans-serif;">Sorting</div>
<div class="t" style="left:2215.70px;top:1611.74px;font-size:19.77px;line-height:23.72px;color:#474747;transform:scaleX(1.0011);font-family:'Liberation Sans',sans-serif;">Options</div>
<div class="r" style="left:2216.00px;top:1666.60px;width:342.00px;height:40.40px;background:#fff;border:1.3px solid #c4c4c4;border-radius:4px;"></div>
<div class="t" style="left:2338.85px;top:1676.24px;font-size:19.77px;line-height:23.72px;color:#474747;font-weight:700;transform:scaleX(0.8857);font-family:'Liberation Sans',sans-serif;">Delete layer</div>
<svg class="r" style="left:0;top:0" width="2574" height="1719" viewBox="0 0 2574 1719"><rect x="13" y="24" width="22.5" height="16.5" rx="1" fill="none" stroke="#404040" stroke-width="2" stroke-linejoin="round" stroke-linecap="round"/>
<line x1="19" y1="24" x2="19" y2="40.5" fill="none" stroke="#404040" stroke-width="2" stroke-linejoin="round" stroke-linecap="round"/>
<path d="M131 40.5 h-2.5 a1.5 1.5 0 0 1 -1.5 -1.5 v-14 a1.5 1.5 0 0 1 1.5 -1.5 h17.5 a1.5 1.5 0 0 1 1.5 1.5 v10" fill="none" stroke="#404040" stroke-width="2" stroke-linejoin="round" stroke-linecap="round"/>
<path d="M133.5 35 h16 a1.5 1.5 0 0 1 0 5.5 h-19 a2.5 2.5 0 0 0 3 -3 z" fill="none" stroke="#404040" stroke-width="2" stroke-linejoin="round" stroke-linecap="round"/>
<path d="M250.5 43 v-21 a1.5 1.5 0 0 1 1.5 -1.5 h11 a1.5 1.5 0 0 1 1.5 1.5 v21 l-7 -6 z" fill="none" stroke="#404040" stroke-width="2" stroke-linejoin="round" stroke-linecap="round"/>
<circle cx="417.4" cy="38.6" r="3.4" fill="none" stroke="#525252" stroke-width="2.2"/><circle cx="430.4" cy="38.6" r="3.4" fill="none" stroke="#525252" stroke-width="2.2"/>
<path d="M415.5 22.5 q-0.5 2 1 3.5 l11 11 l2 -2 z" fill="#525252" stroke="#525252" stroke-width="1" stroke-linejoin="round"/>
<path d="M433 22.5 q0.5 2 -1 3.5 l-6 6.5 l-2 -2 z" fill="#525252" stroke="#525252" stroke-width="1" stroke-linejoin="round"/>
<path d="M420 36 l4 -4 M428 36 l-2 -2" fill="none" stroke="#525252" stroke-width="2" stroke-linejoin="round" stroke-linecap="round"/>
<rect x="467" y="30" width="14.5" height="11.5" rx="1.2" fill="none" stroke="#525252" stroke-width="2" stroke-linejoin="round" stroke-linecap="round"/>
<rect x="474.6" y="22.4" width="14.5" height="11.5" rx="1.2" fill="#f9f9f9" stroke="#525252" stroke-width="2"/>
<rect x="520.3" y="21.6" width="16.1" height="13" rx="1.5" fill="#525252"/>
<rect x="528.7" y="30" width="14.5" height="11.5" rx="1.2" fill="#f9f9f9" stroke="#525252" stroke-width="2"/>
<path d="M578 23.8 h15.6 M583 23.5 l0.8 -2.7 h4.4 l0.8 2.7 M579.8 26.8 h13 v15 a1.3 1.3 0 0 1 -1.3 1.3 h-10.4 a1.3 1.3 0 0 1 -1.3 -1.3 z M583 31 v8 M586.3 31 v8 M589.5 31 v8" fill="none" stroke="#525252" stroke-width="2" stroke-linejoin="round" stroke-linecap="round"/>
<path d="M2018.5 21.6 l-6.5 6.5 l6.5 6.5 M2012.5 28 h8 a12 12 0 0 1 12.5 12 v2" fill="none" stroke="#525252" stroke-width="2" stroke-linecap="round" stroke-linejoin="round"/>
<path d="M2081.1 21.6 l6.5 6.5 l-6.5 6.5 M2087 28 h-8 a12 12 0 0 0 -12.5 12 v2" fill="none" stroke="#c8c8c8" stroke-width="2" stroke-linecap="round" stroke-linejoin="round"/>
<rect x="2121" y="22" width="22.6" height="19.8" rx="1.2" fill="none" stroke="#525252" stroke-width="2"/>
<path d="M2121 28.1 h22.6 M2128.3 28.1 v13.7 M2135.9 28.1 v13.7" fill="none" stroke="#525252" stroke-width="2"/>
<rect x="2282" y="24" width="23" height="16" rx="1" fill="none" stroke="#404040" stroke-width="2" stroke-linejoin="round" stroke-linecap="round"/>
<line x1="2298" y1="24" x2="2298" y2="40" fill="none" stroke="#404040" stroke-width="2" stroke-linejoin="round" stroke-linecap="round"/>
<path d="M2437.5 43 l2 -8 l15 -15 a2 2 0 0 1 3 0 l2.5 2.5 a2 2 0 0 1 0 3 l-15 15 z M2451.5 23 l5.5 5.5 M2446 43.5 h13" fill="none" stroke="#ffffff" stroke-width="2" stroke-linejoin="round" stroke-linecap="round"/>
<path d="M56.5 110.5 h-2.5 a1.5 1.5 0 0 1 -1.5 -1.5 v-14 a1.5 1.5 0 0 1 1.5 -1.5 h19 a1.5 1.5 0 0 1 1.5 1.5 v9" fill="none" stroke="#404040" stroke-width="2" stroke-linejoin="round" stroke-linecap="round"/>
<path d="M59 104.5 h17 a1.5 1.5 0 0 1 1 1.5 v3 a1.5 1.5 0 0 1 -1.5 1.5 h-20 a2.5 2.5 0 0 0 3 -3 z" fill="none" stroke="#404040" stroke-width="2" stroke-linejoin="round" stroke-linecap="round"/>
<path d="M59 209 v-21.5 a1.5 1.5 0 0 1 1.5 -1.5 h11.5 a1.5 1.5 0 0 1 1.5 1.5 v21.5 l-7.3 -5.5 z" fill="none" stroke="#404040" stroke-width="2" stroke-linejoin="round" stroke-linecap="round"/>
<ellipse cx="66" cy="299.5" rx="10" ry="3.8" fill="none" stroke="#404040" stroke-width="2" stroke-linejoin="round" stroke-linecap="round"/>
<path d="M56 299.5 v14 a10 3.8 0 0 0 20 0 v-14 M56 306.5 a10 3.8 0 0 0 20 0" fill="none" stroke="#404040" stroke-width="2" stroke-linejoin="round" stroke-linecap="round"/>
<g transform="rotate(-45 65.5 403)"><rect x="53" y="399" width="14" height="8" rx="4" fill="none" stroke="#404040" stroke-width="2" stroke-linejoin="round" stroke-linecap="round"/><rect x="64" y="399" width="14" height="8" rx="4" fill="none" stroke="#404040" stroke-width="2" stroke-linejoin="round" stroke-linecap="round"/></g>
<rect x="54" y="490.5" width="23" height="17" rx="1" fill="none" stroke="#404040" stroke-width="2" stroke-linejoin="round" stroke-linecap="round"/>
<path d="M59 503 v-5 M63.5 503 v-3 M67.5 503 v-5 M72 503 v-8" fill="none" stroke="#404040" stroke-width="2" stroke-linejoin="round" stroke-linecap="round"/>
<path d="M55 606 v-11 h5 v11 M60 606 v-8 h5 v8 M65 606 v-6 h5 v6 M54 606.5 h23" fill="none" stroke="#404040" stroke-width="2" stroke-linejoin="round" stroke-linecap="round"/>
<path d="M70.5 583 l1.5 3.5 l3.5 1.5 l-3.5 1.5 l-1.5 3.5 l-1.5 -3.5 l-3.5 -1.5 l3.5 -1.5 z" fill="none" stroke="#404040" stroke-width="1.6" stroke-linejoin="round"/>
<path d="M61 585 v5 M58.5 587.5 h5 M76 596 v4 M74 598 h4" fill="none" stroke="#404040" stroke-width="2" stroke-linejoin="round" stroke-linecap="round"/>
<path d="M54.5 700 v-6 a2.5 2.5 0 0 0 0 -5 v-6 h6 a3 3 0 0 1 6 0 h5.5 v5.5 a3 3 0 0 1 0 6 v5.5 h-5.5 a3 3 0 0 0 -6 0 z" fill="none" stroke="#404040" stroke-width="2" stroke-linejoin="round" stroke-linecap="round"/>
<path d="M65.2 772.5 v23 M65.2 774 h-7 l-3.5 3.5 l3.5 3.5 h7 M65.2 782.5 h8.5 l3.8 3.5 l-3.8 3.5 h-8.5" fill="none" stroke="#404040" stroke-width="1.9" stroke-linejoin="round"/>
<path d="M52 871 h9 M54 876 h6 M56 881 h3 M62 878 a7 7 0 0 1 12 -5 l1.5 1.5 M75.5 869 v5.5 h-5 M75 883 a7 7 0 0 1 -12 5 l-1.5 -1.5 M61.5 891 v-5.5 h5" fill="none" stroke="#404040" stroke-width="2" stroke-linejoin="round" stroke-linecap="round"/>
<rect x="54" y="982" width="23" height="20" rx="1" fill="none" stroke="#404040" stroke-width="2" stroke-linejoin="round" stroke-linecap="round"/>
<path d="M54 986 h23" fill="none" stroke="#404040" stroke-width="2" stroke-linejoin="round" stroke-linecap="round"/>
<text x="57" y="999" font-family="Liberation Serif" font-style="italic" font-size="14" fill="#404040">x</text>
<path d="M67.5 992.5 h5 M67.5 996 h5" fill="none" stroke="#404040" stroke-width="2" stroke-linejoin="round" stroke-linecap="round"/>
<path d="M56 1678 v11.5 M59.5 1684 h18.5 M65.5 1677.5 l-6 6.5 l6 6.5" fill="none" stroke="#404040" stroke-width="2" stroke-linejoin="round" stroke-linecap="round"/>
<circle cx="164.5" cy="140" r="6.5" fill="none" stroke="#595959" stroke-width="1.7"/>
<path d="M169.5 145 l4.5 4.5" fill="none" stroke="#595959" stroke-width="2.2" stroke-linecap="round"/>
<path d="M147.5 205 l6 6 l6 -6" fill="none" stroke="#404040" stroke-width="2" stroke-linecap="round" stroke-linejoin="round"/>
<path d="M147.5 1139 l6 6 l6 -6" fill="none" stroke="#404040" stroke-width="2" stroke-linecap="round" stroke-linejoin="round"/>
<path d="M147.5 1655.6 l6 6 l6 -6" fill="none" stroke="#404040" stroke-width="2" stroke-linecap="round" stroke-linejoin="round"/>
<g transform="translate(175,239)"><path d="M1 23 V9.5 a1 1 0 0 1 1 -1 h2 a1 1 0 0 1 1 1 V23 z M9.5 23 V15 a1 1 0 0 1 1 -1 h2 a1 1 0 0 1 1 1 V23 z M18 23 V2 a1 1 0 0 1 1 -1 h2 a1 1 0 0 1 1 1 V23 z" fill="none" stroke="#595959" stroke-width="1.7" stroke-linejoin="round" stroke-linecap="round"/></g>
<g transform="translate(175,277)"><path d="M1 7.5 v9 M1 12 h4.5 M23 7.5 v9 M23 12 h-4.5 M5.5 3.5 h13 v17 h-13 z M12 3.5 v17" fill="none" stroke="#595959" stroke-width="1.7" stroke-linejoin="round" stroke-linecap="round"/></g>
<g transform="translate(175,315)"><path d="M1 2 h15 v5 h-15 z M1 2 v20 M1 9.5 h9 v5 h-9 M1 17 h18 a2 2 0 0 1 0 5 h-18 M21 1 v3 M13 8.5 v2 M21 9.5 v2" fill="none" stroke="#595959" stroke-width="1.7" stroke-linejoin="round" stroke-linecap="round"/></g>
<g transform="translate(175,353)"><path d="M1 23 v-8 h4 v8 z M7 23 v-11 h4 v11 z M13 23 v-9 h4 v9 z M19 23 v-14 h4 v14 z M1 12 l6 -5 l6 3 l10 -9" fill="none" stroke="#595959" stroke-width="1.7" stroke-linejoin="round" stroke-linecap="round"/></g>
<g transform="translate(175,391)"><path d="M4 1 h16 a3 3 0 0 1 0 6 h-16 a3 3 0 0 1 0 -6 z M4 9 h16 a3 3 0 0 1 0 6 h-16 a3 3 0 0 1 0 -6 z M4 17 h16 a3 3 0 0 1 0 6 h-16 a3 3 0 0 1 0 -6 z" fill="none" stroke="#595959" stroke-width="1.7" stroke-linejoin="round" stroke-linecap="round"/><circle cx="8" cy="4" r="1.3" fill="#595959"/><circle cx="15" cy="12" r="1.3" fill="#595959"/><circle cx="10" cy="20" r="1.3" fill="#595959"/></g>
<g transform="translate(175,429)"><path d="M12 23 h-11 v-22 h17 v6 M10 10 h13 l-5 6 v7 l-3 -2 v-5 z" fill="none" stroke="#595959" stroke-width="1.7" stroke-linejoin="round" stroke-linecap="round"/></g>
<g transform="translate(175,467)"><path d="M1 1 h22 l-8 11 v11 l-6 -3 v-8 z" fill="none" stroke="#595959" stroke-width="1.7" stroke-linejoin="round" stroke-linecap="round"/></g>
<g transform="translate(175,505)"><path d="M3 19 a10 10 0 1 1 18 0 M10.5 17 l5 -8 l-2.5 9 z" fill="none" stroke="#595959" stroke-width="1.7" stroke-linejoin="round" stroke-linecap="round"/></g>
<g transform="translate(175,543)"><circle cx="3" cy="3" r="1.1" fill="none" stroke="#595959" stroke-width="1.7" stroke-linejoin="round" stroke-linecap="round"/><circle cx="12" cy="3" r="1.3" fill="none" stroke="#595959" stroke-width="1.7" stroke-linejoin="round" stroke-linecap="round"/><circle cx="21" cy="3" r="2" fill="none" stroke="#595959" stroke-width="1.7" stroke-linejoin="round" stroke-linecap="round"/><circle cx="3" cy="12" r="1.6" fill="none" stroke="#595959" stroke-width="1.7" stroke-linejoin="round" stroke-linecap="round"/><circle cx="12" cy="12" r="2.6" fill="none" stroke="#595959" stroke-width="1.7" stroke-linejoin="round" stroke-linecap="round"/><circle cx="21" cy="12" r="1.3" fill="none" stroke="#595959" stroke-width="1.7" stroke-linejoin="round" stroke-linecap="round"/><circle cx="3" cy="21" r="2.5" fill="none" stroke="#595959" stroke-width="1.7" stroke-linejoin="round" stroke-linecap="round"/><circle cx="12" cy="21" r="1.8" fill="none" stroke="#595959" stroke-width="1.7" stroke-linejoin="round" stroke-linecap="round"/><circle cx="21" cy="21" r="2" fill="none" stroke="#595959" stroke-width="1.7" stroke-linejoin="round" stroke-linecap="round"/></g>
<g transform="translate(175,581)"><path d="M1 23 v-9 h5 v9 z M6 23 v-16 h5 v16 z M11 23 v-21 h5 v21 z M16 23 v-12 h5 v12 z" fill="none" stroke="#595959" stroke-width="1.7" stroke-linejoin="round" stroke-linecap="round"/></g>
<g transform="translate(175,619)"><text x="0" y="20" font-family="Liberation Sans" font-size="22" fill="#595959" textLength="24" lengthAdjust="spacingAndGlyphs">#1</text></g>
<g transform="translate(175,657)"><path d="M1 1 v22 h22 M4 17 l6 -7 l4 4 l9 -9" fill="none" stroke="#595959" stroke-width="1.7" stroke-linejoin="round" stroke-linecap="round"/></g>
<g transform="translate(175,695)"><path d="M12 1 a11 11 0 1 1 0 22 a11 11 0 1 1 0 -22 z M5 4 l2 4 l4 1 l-1 4 l3 3 v4 l-2 3 M16 2 l-1 3 l3 3 l4 0 M14 17 l3 -2 l2 3" fill="none" stroke="#595959" stroke-width="1.7" stroke-linejoin="round" stroke-linecap="round"/></g>
<g transform="translate(175,733)"><path d="M1 1 h22 v22 h-22 z M1 8 h22 M1 15 h22 M8 1 v22 M15 1 v22" fill="none" stroke="#595959" stroke-width="1.7" stroke-linejoin="round" stroke-linecap="round"/></g>
<g transform="translate(175,771)"><path d="M1 1 h7 v4 h-7 z M4.5 5 v5 h15 v4 M4.5 10 v4 M1 14 h7 v4 h-7 z M16 14 h7 v4 h-7 z M4.5 18 v1 M1 19 h7 v4 h-7 z M16 19 h7 v4 h-7 z" fill="none" stroke="#595959" stroke-width="1.7" stroke-linejoin="round" stroke-linecap="round"/></g>
<g transform="translate(175,809)"><path d="M11 3 a10 10 0 1 0 10 10 h-10 z M14 1 v9 h9 a9 9 0 0 0 -9 -9 z" fill="none" stroke="#595959" stroke-width="1.7" stroke-linejoin="round" stroke-linecap="round"/></g>
<g transform="translate(175,847)"><path d="M1 1 h22 v22 h-22 z M1 6 h22 M7 6 v17 M12 6 v17 M17 6 v17 M3 3 h2" fill="none" stroke="#595959" stroke-width="1.7" stroke-linejoin="round" stroke-linecap="round"/></g>
<g transform="translate(175,885)"><path d="M1 5 c5 -4 8 4 12 0 s8 -3 10 -2 M1 12 c5 -4 8 4 12 0 s8 -3 10 -2 M1 19 c5 -4 8 4 12 0 s8 -3 10 -2" fill="none" stroke="#595959" stroke-width="1.7" stroke-linejoin="round" stroke-linecap="round"/></g>
<g transform="translate(175,923)"><path d="M6 0.5 a4.5 4.5 0 1 1 0 9 a4.5 4.5 0 1 1 0 -9 z M19 7 a3.8 3.8 0 1 1 0 7.6 a3.8 3.8 0 1 1 0 -7.6 z M8 16 a3 3 0 1 1 0 6 a3 3 0 1 1 0 -6 z" fill="none" stroke="#595959" stroke-width="1.7" stroke-linejoin="round" stroke-linecap="round"/></g>
<g transform="translate(175,961)"><path d="M1 1 h22 v22 h-22 z M1 6 h22 M8 6 v17 M16 6 v17" fill="none" stroke="#595959" stroke-width="1.7" stroke-linejoin="round" stroke-linecap="round"/></g>
<g transform="translate(175,999)"><path d="M1 1 h22 v22 h-22 z M12 1 v22 M1 14 h22 M12 8 h11 M7 14 v9 M17 14 v9" fill="none" stroke="#595959" stroke-width="1.7" stroke-linejoin="round" stroke-linecap="round"/></g>
<g transform="translate(175,1037)"><path d="M1 1 h4 v22 h-4 z M9 1 h4 v5 h-4 z M15 8 h4 v5 h-4 z M19.5 14 h3 v8 h-3 z" fill="none" stroke="#595959" stroke-width="1.7" stroke-linejoin="round" stroke-linecap="round"/></g>
<g transform="translate(175,1075)"><path d="M1 1 h22 v22 h-22 z M1 6 h22 M1 14 h22 M8 6 v17 M16 6 v17 M19 10 h2 M19 13 h2 M19 17 h2 M19 20 h2" fill="none" stroke="#595959" stroke-width="1.7" stroke-linejoin="round" stroke-linecap="round"/></g>
<g transform="translate(175,1173)"><path d="M12 1 a11 11 0 1 1 0 22 a11 11 0 1 1 0 -22 z M9 7 v10 l8 -5 z" fill="none" stroke="#595959" stroke-width="1.7" stroke-linejoin="round" stroke-linecap="round"/></g>
<g transform="translate(175,1211)"><path d="M1 7 v15 h22 v-15 M6 9 c0 5 12 5 12 0 v-4 c0 -5 -12 -5 -12 0 z M6 5 c0 3 12 3 12 0" fill="none" stroke="#595959" stroke-width="1.7" stroke-linejoin="round" stroke-linecap="round"/></g>
<g transform="translate(175,1249)"><path d="M1 3 h22 v20 h-22 z M1 8 h22 M6 1 v4 M18 1 v4 M14 15 h4 v4 h-4 z" fill="none" stroke="#595959" stroke-width="1.7" stroke-linejoin="round" stroke-linecap="round"/></g>
<g transform="translate(175,1287)"><rect x="1" y="2" width="22" height="20" rx="1" fill="none" stroke="#595959" stroke-width="1.7" stroke-dasharray="3 2"/><path d="M7 7 h6 v6 h-6 z M10 10 h7 v7 h-7 z" fill="none" stroke="#595959" stroke-width="1.7" stroke-linejoin="round" stroke-linecap="round"/></g>
<g transform="translate(175,1325)"><path d="M1 8 h22" fill="none" stroke="#595959" stroke-width="1.7" stroke-linejoin="round" stroke-linecap="round"/><path d="M1 15 h22" fill="none" stroke="#595959" stroke-width="1.7" stroke-dasharray="3 2"/></g>
<g transform="translate(175,1363)"><path d="M4 19 h-2 a1 1 0 0 1 -1 -1 v-13 a1 1 0 0 1 1 -1 h3 M19 4 h3 a1 1 0 0 1 1 1 v13 a1 1 0 0 1 -1 1 h-11 l-5 4 v-4 M12 1 a5 5 0 0 1 3 9 v4 h-6 v-4 a5 5 0 0 1 3 -9 z" fill="none" stroke="#595959" stroke-width="1.7" stroke-linejoin="round" stroke-linecap="round"/></g>
<g transform="translate(175,1401)"><path d="M1 4 h22 M1 12 h22 M1 20 h22" fill="none" stroke="#595959" stroke-width="3"/></g>
<g transform="translate(175,1439)"><rect x="1" y="1" width="22" height="22" rx="1" fill="none" stroke="#595959" stroke-width="1.7" stroke-dasharray="3 2"/><path d="M1 8 h22 M7 1 v7 M6 12 h12 v7 h-12 z" fill="none" stroke="#595959" stroke-width="1.7" stroke-linejoin="round" stroke-linecap="round"/></g>
<g transform="translate(175,1477)"><text x="0" y="19" font-family="Liberation Sans" font-size="17" fill="#595959" textLength="19" lengthAdjust="spacingAndGlyphs">Aa</text><path d="M22 1 v22 M20.5 1 h3 M20.5 23 h3" fill="none" stroke="#595959" stroke-width="1.7" stroke-linejoin="round" stroke-linecap="round"/></g>
<g transform="translate(175,1515)"><path d="M1 2 h9 v8 h-9 z M14 2 h9 v8 h-9 z M1 14 h9 v8 h-9 z M14 14 h9 v8 h-9 z" fill="none" stroke="#595959" stroke-width="1.7" stroke-linejoin="round" stroke-linecap="round"/></g>
<g transform="translate(175,1553)"><path d="M4 1 v22 M12 1 v22 M20 1 v22 M4 6 m-3 0 a3 3 0 1 0 6 0 a3 3 0 1 0 -6 0 M12 16 m-3 0 a3 3 0 1 0 6 0 a3 3 0 1 0 -6 0 M20 8 m-3 0 a3 3 0 1 0 6 0 a3 3 0 1 0 -6 0" fill="none" stroke="#595959" stroke-width="1.7" stroke-linejoin="round" stroke-linecap="round"/></g>
<g transform="translate(175,1591)"><path d="M1 5 h22 v15 h-22 z M10 9 v7 l6 -3.5 z" fill="none" stroke="#595959" stroke-width="1.7" stroke-linejoin="round" stroke-linecap="round"/></g>
<g transform="translate(175,1689)"><path d="M12 4 a2.5 2.5 0 1 1 0 0.01 M3 21 a2.5 2.5 0 1 1 0 0.01 M21 21 a2.5 2.5 0 1 1 0 0.01 M12 6.5 v8 M12 14.5 l-7.5 5 M12 14.5 l7.5 5 M12 13 a2 2 0 1 1 0 0.01" fill="none" stroke="#595959" stroke-width="1.7" stroke-linejoin="round" stroke-linecap="round"/></g>
<path d="M462 189 l6.5 -9.5 l6.5 9.5 z" fill="#8c8c8c" stroke="#8c8c8c" stroke-width="1.5" stroke-linejoin="round"/>
<path d="M462 1704 l6.5 9 l6.5 -9 z" fill="#8c8c8c" stroke="#8c8c8c" stroke-width="1.5" stroke-linejoin="round"/>
<path d="M2230.3 86.5 l-6.3 6.3 l6.3 6.3" fill="none" stroke="#404040" stroke-width="2.8" stroke-linecap="round" stroke-linejoin="round"/>
<text x="2424" y="455.6" font-family="Liberation Serif" font-style="italic" font-size="24" fill="#404040">f</text>
<path d="M2435 446.1 l8 8 M2443 446.1 l-8 8" stroke="#404040" stroke-width="1.6" fill="none"/>
<text x="2491" y="556" font-family="Liberation Serif" font-style="italic" font-size="24" fill="#404040">f</text>
<path d="M2502 546.5 l8 8 M2510 546.5 l-8 8" stroke="#404040" stroke-width="1.6" fill="none"/>
<path d="M2495.5 444.6 h13 l-6.5 8 z" fill="#404040"/>
<path d="M2506 645 h13 l-6.5 8 z" fill="#404040"/>
<path d="M2509.5 350.5 h6 l-3 3 z" fill="#404040"/>
<path d="M2510 1402 l5 5 l5 -5" fill="none" stroke="#404040" stroke-width="2.2" stroke-linecap="round" stroke-linejoin="round"/>
<path d="M2556 368 l6.5 -10 l6.5 10 z" fill="#8c8c8c" stroke="#8c8c8c" stroke-linejoin="round"/>
<path d="M2556 1521 l6.5 10 l6.5 -10 z" fill="#8c8c8c" stroke="#8c8c8c" stroke-linejoin="round"/>
<path d="M2204 883.5 v17 M2208.7 885.5 v13" stroke="#7a7a7a" stroke-width="1.6" stroke-linecap="round"/>
<path d="M471.3 897 v14 M475.8 895.5 v17" stroke="#666" stroke-width="1.6" stroke-linecap="round"/>
<path d="M2522.5 1680 h17 M2527 1680 v-3 h8 v3 M2525 1680 v16 a1 1 0 0 0 1 1 h10 a1 1 0 0 0 1 -1 v-16 M2528.5 1684 v9 M2531 1684 v9 M2533.5 1684 v9" fill="none" stroke="#404040" stroke-width="1.8" stroke-linecap="round" stroke-linejoin="round"/></svg></div></body></html>
